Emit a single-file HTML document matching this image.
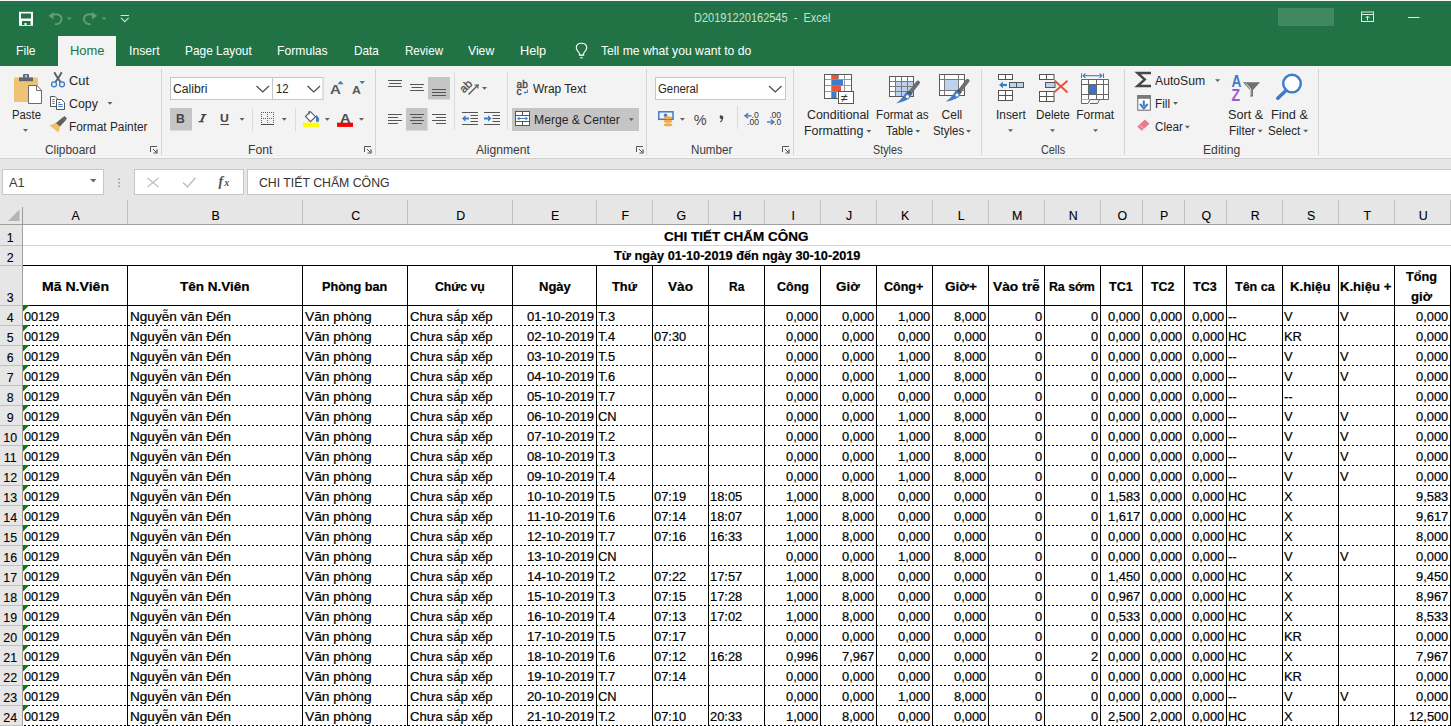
<!DOCTYPE html>
<html><head><meta charset='utf-8'><style>
*{margin:0;padding:0;box-sizing:border-box}
html,body{width:1451px;height:726px;overflow:hidden;background:#fff}
body{position:relative;font-family:'Liberation Sans',sans-serif}
.a{position:absolute}
.t{position:absolute;white-space:pre;transform-origin:0 0;font-family:'Liberation Sans',sans-serif}
.g{-webkit-text-stroke:0.2px currentColor}
.h{-webkit-text-stroke:0.1px currentColor}
svg{position:absolute;left:0;top:0;overflow:visible}
</style></head><body>
<div class="a" style="left:0px;top:0px;width:1451px;height:66px;background:#217346;"></div>
<div class="a" style="left:0px;top:0px;width:1451px;height:1px;background:#f4f6fb;"></div>
<div class="a" style="left:0px;top:1px;width:1451px;height:1px;background:#3d5a98;"></div>
<div class="a" style="left:0px;top:2px;width:1451px;height:2px;background:#1f7a3c;"></div>
<div class="a" style="left:0px;top:4px;width:1451px;height:1px;background:#237060;"></div>
<div class="a" style="left:0px;top:5px;width:1451px;height:1px;background:#22702e;"></div>
<div class="a" style="left:58px;top:36px;width:58px;height:30px;background:#f3f3f3;"></div>
<div class="a" style="left:0px;top:66px;width:1451px;height:92px;background:#f3f3f3;"></div>
<div class="a" style="left:0px;top:154px;width:1451px;height:4px;background:#f6f6f6;"></div>
<div class="a" style="left:0px;top:155px;width:1451px;height:1px;background:#ededed;"></div>
<div class="a" style="left:0px;top:158px;width:1451px;height:1px;background:#d2d2d2;"></div>
<div class="a" style="left:0px;top:159px;width:1451px;height:41px;background:#e6e6e6;"></div>
<div class="a" style="left:1278px;top:8px;width:56px;height:18px;background:#41875f;"></div>
<div class="a" style="left:161px;top:69px;width:1px;height:86px;background:#d5d5d5;"></div>
<div class="a" style="left:375px;top:69px;width:1px;height:86px;background:#d5d5d5;"></div>
<div class="a" style="left:646px;top:69px;width:1px;height:86px;background:#d5d5d5;"></div>
<div class="a" style="left:793px;top:69px;width:1px;height:86px;background:#d5d5d5;"></div>
<div class="a" style="left:981px;top:69px;width:1px;height:86px;background:#d5d5d5;"></div>
<div class="a" style="left:1124px;top:69px;width:1px;height:86px;background:#d5d5d5;"></div>
<div class="a" style="left:1318px;top:69px;width:1px;height:86px;background:#d5d5d5;"></div>
<div class="a" style="left:252px;top:108px;width:1px;height:23px;background:#dadada;"></div>
<div class="a" style="left:295px;top:108px;width:1px;height:23px;background:#dadada;"></div>
<div class="a" style="left:454px;top:72px;width:1px;height:58px;background:#dadada;"></div>
<div class="a" style="left:507px;top:72px;width:1px;height:58px;background:#dadada;"></div>
<div class="a" style="left:737px;top:106px;width:1px;height:23px;background:#dadada;"></div>
<div class="a" style="left:2px;top:169px;width:102px;height:26px;background:#ffffff;border:1px solid #c6c6c6"></div>
<div class="a" style="left:134px;top:169px;width:110px;height:26px;background:#ffffff;border:1px solid #c6c6c6"></div>
<div class="a" style="left:247px;top:169px;width:1210px;height:26px;background:#ffffff;border:1px solid #c6c6c6"></div>
<div class="a" style="left:0px;top:200px;width:1451px;height:24px;background:#e6e6e6;"></div>
<div class="a" style="left:0px;top:224px;width:1451px;height:1px;background:#9e9e9e;"></div>
<div class="a" style="left:22px;top:207px;width:1px;height:18px;background:#9a9a9a;"></div>
<div class="a" style="left:127px;top:200px;width:1px;height:24px;background:#c0c0c0;"></div>
<div class="a" style="left:302px;top:200px;width:1px;height:24px;background:#c0c0c0;"></div>
<div class="a" style="left:407px;top:200px;width:1px;height:24px;background:#c0c0c0;"></div>
<div class="a" style="left:512px;top:200px;width:1px;height:24px;background:#c0c0c0;"></div>
<div class="a" style="left:596px;top:200px;width:1px;height:24px;background:#c0c0c0;"></div>
<div class="a" style="left:652px;top:200px;width:1px;height:24px;background:#c0c0c0;"></div>
<div class="a" style="left:708px;top:200px;width:1px;height:24px;background:#c0c0c0;"></div>
<div class="a" style="left:764px;top:200px;width:1px;height:24px;background:#c0c0c0;"></div>
<div class="a" style="left:820px;top:200px;width:1px;height:24px;background:#c0c0c0;"></div>
<div class="a" style="left:876px;top:200px;width:1px;height:24px;background:#c0c0c0;"></div>
<div class="a" style="left:932px;top:200px;width:1px;height:24px;background:#c0c0c0;"></div>
<div class="a" style="left:988px;top:200px;width:1px;height:24px;background:#c0c0c0;"></div>
<div class="a" style="left:1044px;top:200px;width:1px;height:24px;background:#c0c0c0;"></div>
<div class="a" style="left:1100px;top:200px;width:1px;height:24px;background:#c0c0c0;"></div>
<div class="a" style="left:1142px;top:200px;width:1px;height:24px;background:#c0c0c0;"></div>
<div class="a" style="left:1184px;top:200px;width:1px;height:24px;background:#c0c0c0;"></div>
<div class="a" style="left:1226px;top:200px;width:1px;height:24px;background:#c0c0c0;"></div>
<div class="a" style="left:1282px;top:200px;width:1px;height:24px;background:#c0c0c0;"></div>
<div class="a" style="left:1338px;top:200px;width:1px;height:24px;background:#c0c0c0;"></div>
<div class="a" style="left:1394px;top:200px;width:1px;height:24px;background:#c0c0c0;"></div>
<div class="a" style="left:1450px;top:200px;width:1px;height:24px;background:#c0c0c0;"></div>
<svg width="1451" height="726"><polygon points="8,221 19.5,221 19.5,209.5" fill="#b4b4b4"/></svg>
<div class="a" style="left:23px;top:225px;width:1428px;height:501px;background:#ffffff;"></div>
<div class="a" style="left:23px;top:245px;width:1428px;height:1px;background:#d4d4d4;"></div>
<div class="a" style="left:22px;top:265px;width:1429px;height:1px;background:#000;"></div>
<div class="a" style="left:22px;top:305px;width:1429px;height:1px;background:#000;"></div>
<div class="a" style="left:0;top:325px;width:1451px;height:1px;background-image:repeating-linear-gradient(90deg,#000 0 2px,transparent 2px 4px)"></div>
<div class="a" style="left:0;top:345px;width:1451px;height:1px;background-image:repeating-linear-gradient(90deg,#000 0 2px,transparent 2px 4px)"></div>
<div class="a" style="left:0;top:365px;width:1451px;height:1px;background-image:repeating-linear-gradient(90deg,#000 0 2px,transparent 2px 4px)"></div>
<div class="a" style="left:0;top:385px;width:1451px;height:1px;background-image:repeating-linear-gradient(90deg,#000 0 2px,transparent 2px 4px)"></div>
<div class="a" style="left:0;top:405px;width:1451px;height:1px;background-image:repeating-linear-gradient(90deg,#000 0 2px,transparent 2px 4px)"></div>
<div class="a" style="left:0;top:425px;width:1451px;height:1px;background-image:repeating-linear-gradient(90deg,#000 0 2px,transparent 2px 4px)"></div>
<div class="a" style="left:0;top:445px;width:1451px;height:1px;background-image:repeating-linear-gradient(90deg,#000 0 2px,transparent 2px 4px)"></div>
<div class="a" style="left:0;top:465px;width:1451px;height:1px;background-image:repeating-linear-gradient(90deg,#000 0 2px,transparent 2px 4px)"></div>
<div class="a" style="left:0;top:485px;width:1451px;height:1px;background-image:repeating-linear-gradient(90deg,#000 0 2px,transparent 2px 4px)"></div>
<div class="a" style="left:0;top:505px;width:1451px;height:1px;background-image:repeating-linear-gradient(90deg,#000 0 2px,transparent 2px 4px)"></div>
<div class="a" style="left:0;top:525px;width:1451px;height:1px;background-image:repeating-linear-gradient(90deg,#000 0 2px,transparent 2px 4px)"></div>
<div class="a" style="left:0;top:545px;width:1451px;height:1px;background-image:repeating-linear-gradient(90deg,#000 0 2px,transparent 2px 4px)"></div>
<div class="a" style="left:0;top:565px;width:1451px;height:1px;background-image:repeating-linear-gradient(90deg,#000 0 2px,transparent 2px 4px)"></div>
<div class="a" style="left:0;top:585px;width:1451px;height:1px;background-image:repeating-linear-gradient(90deg,#000 0 2px,transparent 2px 4px)"></div>
<div class="a" style="left:0;top:605px;width:1451px;height:1px;background-image:repeating-linear-gradient(90deg,#000 0 2px,transparent 2px 4px)"></div>
<div class="a" style="left:0;top:625px;width:1451px;height:1px;background-image:repeating-linear-gradient(90deg,#000 0 2px,transparent 2px 4px)"></div>
<div class="a" style="left:0;top:645px;width:1451px;height:1px;background-image:repeating-linear-gradient(90deg,#000 0 2px,transparent 2px 4px)"></div>
<div class="a" style="left:0;top:665px;width:1451px;height:1px;background-image:repeating-linear-gradient(90deg,#000 0 2px,transparent 2px 4px)"></div>
<div class="a" style="left:0;top:685px;width:1451px;height:1px;background-image:repeating-linear-gradient(90deg,#000 0 2px,transparent 2px 4px)"></div>
<div class="a" style="left:0;top:705px;width:1451px;height:1px;background-image:repeating-linear-gradient(90deg,#000 0 2px,transparent 2px 4px)"></div>
<div class="a" style="left:0;top:725px;width:1451px;height:1px;background-image:repeating-linear-gradient(90deg,#000 0 2px,transparent 2px 4px)"></div>
<div class="a" style="left:127px;top:265px;width:1px;height:461px;background:#000;"></div>
<div class="a" style="left:302px;top:265px;width:1px;height:461px;background:#000;"></div>
<div class="a" style="left:407px;top:265px;width:1px;height:461px;background:#000;"></div>
<div class="a" style="left:512px;top:265px;width:1px;height:461px;background:#000;"></div>
<div class="a" style="left:596px;top:265px;width:1px;height:461px;background:#000;"></div>
<div class="a" style="left:652px;top:265px;width:1px;height:461px;background:#000;"></div>
<div class="a" style="left:708px;top:265px;width:1px;height:461px;background:#000;"></div>
<div class="a" style="left:764px;top:265px;width:1px;height:461px;background:#000;"></div>
<div class="a" style="left:820px;top:265px;width:1px;height:461px;background:#000;"></div>
<div class="a" style="left:876px;top:265px;width:1px;height:461px;background:#000;"></div>
<div class="a" style="left:932px;top:265px;width:1px;height:461px;background:#000;"></div>
<div class="a" style="left:988px;top:265px;width:1px;height:461px;background:#000;"></div>
<div class="a" style="left:1044px;top:265px;width:1px;height:461px;background:#000;"></div>
<div class="a" style="left:1100px;top:265px;width:1px;height:461px;background:#000;"></div>
<div class="a" style="left:1142px;top:265px;width:1px;height:461px;background:#000;"></div>
<div class="a" style="left:1184px;top:265px;width:1px;height:461px;background:#000;"></div>
<div class="a" style="left:1226px;top:265px;width:1px;height:461px;background:#000;"></div>
<div class="a" style="left:1282px;top:265px;width:1px;height:461px;background:#000;"></div>
<div class="a" style="left:1338px;top:265px;width:1px;height:461px;background:#000;"></div>
<div class="a" style="left:1394px;top:265px;width:1px;height:461px;background:#000;"></div>
<div class="a" style="left:1450px;top:265px;width:1px;height:461px;background:#000;"></div>
<div class="a" style="left:0px;top:225px;width:22px;height:501px;background:#e6e6e6;"></div>
<div class="a" style="left:22px;top:225px;width:1px;height:501px;background:#a0a0a0;"></div>
<div class="a" style="left:0px;top:245px;width:22px;height:1px;background:#c0c0c0;"></div>
<div class="a" style="left:0px;top:265px;width:22px;height:1px;background:#c0c0c0;"></div>
<div class="a" style="left:0px;top:305px;width:22px;height:1px;background:#c0c0c0;"></div>
<div class="a" style="left:0px;top:325px;width:22px;height:1px;background:#c0c0c0;"></div>
<div class="a" style="left:0px;top:345px;width:22px;height:1px;background:#c0c0c0;"></div>
<div class="a" style="left:0px;top:365px;width:22px;height:1px;background:#c0c0c0;"></div>
<div class="a" style="left:0px;top:385px;width:22px;height:1px;background:#c0c0c0;"></div>
<div class="a" style="left:0px;top:405px;width:22px;height:1px;background:#c0c0c0;"></div>
<div class="a" style="left:0px;top:425px;width:22px;height:1px;background:#c0c0c0;"></div>
<div class="a" style="left:0px;top:445px;width:22px;height:1px;background:#c0c0c0;"></div>
<div class="a" style="left:0px;top:465px;width:22px;height:1px;background:#c0c0c0;"></div>
<div class="a" style="left:0px;top:485px;width:22px;height:1px;background:#c0c0c0;"></div>
<div class="a" style="left:0px;top:505px;width:22px;height:1px;background:#c0c0c0;"></div>
<div class="a" style="left:0px;top:525px;width:22px;height:1px;background:#c0c0c0;"></div>
<div class="a" style="left:0px;top:545px;width:22px;height:1px;background:#c0c0c0;"></div>
<div class="a" style="left:0px;top:565px;width:22px;height:1px;background:#c0c0c0;"></div>
<div class="a" style="left:0px;top:585px;width:22px;height:1px;background:#c0c0c0;"></div>
<div class="a" style="left:0px;top:605px;width:22px;height:1px;background:#c0c0c0;"></div>
<div class="a" style="left:0px;top:625px;width:22px;height:1px;background:#c0c0c0;"></div>
<div class="a" style="left:0px;top:645px;width:22px;height:1px;background:#c0c0c0;"></div>
<div class="a" style="left:0px;top:665px;width:22px;height:1px;background:#c0c0c0;"></div>
<div class="a" style="left:0px;top:685px;width:22px;height:1px;background:#c0c0c0;"></div>
<div class="a" style="left:0px;top:705px;width:22px;height:1px;background:#c0c0c0;"></div>
<div class="a" style="left:0px;top:725px;width:22px;height:1px;background:#c0c0c0;"></div>
<svg width="1451" height="726"><polygon points="23,305 29.5,305 23,311.5" fill="#008000"/><polygon points="23,325 29.5,325 23,331.5" fill="#008000"/><polygon points="23,345 29.5,345 23,351.5" fill="#008000"/><polygon points="23,365 29.5,365 23,371.5" fill="#008000"/><polygon points="23,385 29.5,385 23,391.5" fill="#008000"/><polygon points="23,405 29.5,405 23,411.5" fill="#008000"/><polygon points="23,425 29.5,425 23,431.5" fill="#008000"/><polygon points="23,445 29.5,445 23,451.5" fill="#008000"/><polygon points="23,465 29.5,465 23,471.5" fill="#008000"/><polygon points="23,485 29.5,485 23,491.5" fill="#008000"/><polygon points="23,505 29.5,505 23,511.5" fill="#008000"/><polygon points="23,525 29.5,525 23,531.5" fill="#008000"/><polygon points="23,545 29.5,545 23,551.5" fill="#008000"/><polygon points="23,565 29.5,565 23,571.5" fill="#008000"/><polygon points="23,585 29.5,585 23,591.5" fill="#008000"/><polygon points="23,605 29.5,605 23,611.5" fill="#008000"/><polygon points="23,625 29.5,625 23,631.5" fill="#008000"/><polygon points="23,645 29.5,645 23,651.5" fill="#008000"/><polygon points="23,665 29.5,665 23,671.5" fill="#008000"/><polygon points="23,685 29.5,685 23,691.5" fill="#008000"/><polygon points="23,705 29.5,705 23,711.5" fill="#008000"/></svg>
<svg width="1451" height="726"><rect x="19" y="11.8" width="14" height="14" fill="#ffffff" /><rect x="21" y="13.5" width="10" height="5" fill="#217346" /><rect x="22" y="21" width="8.5" height="4" fill="#217346" /><rect x="24.5" y="23" width="2" height="2" fill="#ffffff" /><path d="M51 15.5 C56 12.5 62 15 61.5 19.5 C61 23.5 57.5 24.5 55 24" fill="none" stroke="#5f9f78" stroke-width="2" /><path d="M48.5 15.8 L53.5 12 L53.5 19.5 Z" fill="#5f9f78" /><path d="M66.8 17.5 L71.8 17.5 L69.3 20.0 Z" fill="#5f9f78" /><path d="M94.5 15.5 C89.5 12.5 83.5 15 84 19.5 C84.5 23.5 88 24.5 90.5 24" fill="none" stroke="#5f9f78" stroke-width="2" /><path d="M97 15.8 L92 12 L92 19.5 Z" fill="#5f9f78" /><path d="M101.6 17.5 L106.6 17.5 L104.1 20.0 Z" fill="#5f9f78" /><line x1="120.6" y1="15.5" x2="129" y2="15.5" stroke="#cfe6d7" stroke-width="1" /><path d="M121 17.8 L124.8 21.6 L128.6 17.8" fill="none" stroke="#cfe6d7" stroke-width="1.1" /><rect x="1361.5" y="12" width="12" height="9.5" fill="none" stroke="#d6eede" stroke-width="1" /><line x1="1361.5" y1="14.5" x2="1373.5" y2="14.5" stroke="#d6eede" stroke-width="1" /><line x1="1367.5" y1="16.5" x2="1367.5" y2="20.5" stroke="#d6eede" stroke-width="1" /><path d="M1365.5 18 L1367.5 16 L1369.5 18" fill="none" stroke="#d6eede" stroke-width="1" /><line x1="1408" y1="17.5" x2="1419.5" y2="17.5" stroke="#e0f0e6" stroke-width="1" /><path d="M579.3 55 L579.3 53 C577 50.5 576.3 49 576.3 47.8 C576.3 45 578.6 43.3 581.5 43.3 C584.4 43.3 586.7 45 586.7 47.8 C586.7 49 586 50.5 583.7 53 L583.7 55 Z" fill="none" stroke="#ffffff" stroke-width="1.1" /><line x1="579.3" y1="55.2" x2="583.7" y2="55.2" stroke="#ffffff" stroke-width="1" /><line x1="580.3" y1="57.8" x2="582.7" y2="57.8" stroke="#ffffff" stroke-width="1.1" /><rect x="14" y="77.5" width="24" height="24.5" fill="#f0c274" rx="1"/><rect x="19" y="77.4" width="14" height="3.8" fill="#5c6570" /><path d="M23 77.5 L23 74.8 Q23 74 24 74 L28 74 Q29 74 29 74.8 L29 77.5 Z" fill="#5c6570" /><rect x="25" y="75.2" width="2" height="1.6" fill="#dfe3e8" /><path d="M28.5 85.5 L36.8 85.5 L41.5 90.2 L41.5 103.5 L28.5 103.5 Z" fill="#ffffff" stroke="#6a6a6a" stroke-width="1" /><path d="M36.5 85.5 L36.5 90.5 L41.5 90.5" fill="none" stroke="#6a6a6a" stroke-width="1" /><path d="M23.0 129 L28.0 129 L25.5 131.7 Z" fill="#606060" /><path d="M54.3 72.3 Q56 75.5 58 78.5 L61 82.5" fill="none" stroke="#5e5e5e" stroke-width="1.9" /><path d="M61.7 72.3 Q60 75.5 58 78.5 L55 82.5" fill="none" stroke="#5e5e5e" stroke-width="1.9" /><circle cx="54" cy="84.3" r="2.5" fill="#e9f0f8" stroke="#3f7bc6" stroke-width="1.3"/><circle cx="62" cy="84.3" r="2.5" fill="#e9f0f8" stroke="#3f7bc6" stroke-width="1.3"/><path d="M50.5 96.5 L55 96.5 L57 98.5 L57 106.5 L50.5 106.5 Z" fill="#ffffff" stroke="#555" stroke-width="1" /><line x1="52.3" y1="99.5" x2="54.7" y2="99.5" stroke="#3f7bc6" stroke-width="1" /><line x1="52.3" y1="101.5" x2="54.7" y2="101.5" stroke="#3f7bc6" stroke-width="1" /><line x1="52.3" y1="103.5" x2="54.7" y2="103.5" stroke="#3f7bc6" stroke-width="1" /><path d="M56.5 99.5 L61.5 99.5 L64.5 102.5 L64.5 109.5 L56.5 109.5 Z" fill="#ffffff" stroke="#555" stroke-width="1" /><line x1="58.3" y1="102.5" x2="60.3" y2="102.5" stroke="#3f7bc6" stroke-width="1" /><line x1="58.3" y1="104.5" x2="62.7" y2="104.5" stroke="#3f7bc6" stroke-width="1" /><line x1="58.3" y1="106.5" x2="62.7" y2="106.5" stroke="#3f7bc6" stroke-width="1" /><path d="M107.5 102 L112.5 102 L110 104.7 Z" fill="#606060" /><path d="M49.5 125.5 L56.5 122.5 L60 126.5 L58.5 132.5 Z" fill="#efbe68" /><path d="M56 123 L62.5 117.5 L65.5 120.5 L60 126.5 Z" fill="#5f5f5f" /><path d="M62.5 117.8 L64.5 116 L67 118.5 L65.2 120.5 Z" fill="#5f5f5f" /><path d="M150.5 152 L150.5 146.5 L157 146.5" fill="none" stroke="#555" stroke-width="1" /><line x1="153" y1="149" x2="156.5" y2="152.5" stroke="#555" stroke-width="1" /><path d="M153.5 153 L157 153 L157 149.5" fill="none" stroke="#555" stroke-width="1.2" /><path d="M364.5 152 L364.5 146.5 L371 146.5" fill="none" stroke="#555" stroke-width="1" /><line x1="367" y1="149" x2="370.5" y2="152.5" stroke="#555" stroke-width="1" /><path d="M367.5 153 L371 153 L371 149.5" fill="none" stroke="#555" stroke-width="1.2" /><path d="M636.5 152 L636.5 146.5 L643 146.5" fill="none" stroke="#555" stroke-width="1" /><line x1="639" y1="149" x2="642.5" y2="152.5" stroke="#555" stroke-width="1" /><path d="M639.5 153 L643 153 L643 149.5" fill="none" stroke="#555" stroke-width="1.2" /><path d="M782.5 152 L782.5 146.5 L789 146.5" fill="none" stroke="#555" stroke-width="1" /><line x1="785" y1="149" x2="788.5" y2="152.5" stroke="#555" stroke-width="1" /><path d="M785.5 153 L789 153 L789 149.5" fill="none" stroke="#555" stroke-width="1.2" /><rect x="170.5" y="77.5" width="102" height="22" fill="#ffffff" stroke="#c6c6c6" stroke-width="1" /><rect x="272.5" y="77.5" width="50.5" height="22" fill="#ffffff" stroke="#c6c6c6" stroke-width="1" /><path d="M256.5 86 L262.8 92 L269 86" fill="none" stroke="#4a4a4a" stroke-width="1.2" /><path d="M307.5 86 L313.8 92 L320 86" fill="none" stroke="#4a4a4a" stroke-width="1.2" /><path d="M337.5 84.3 L340.5 80.8 L343.5 84.3 Z" fill="#3f7bc6" /><path d="M359.5 81 L365 81 L362.2 84.3 Z" fill="#3f7bc6" /><rect x="170" y="108" width="22" height="22.5" fill="#c5c5c5" /><line x1="220.5" y1="124.5" x2="229" y2="124.5" stroke="#444444" stroke-width="1" /><path d="M239.5 118 L244.5 118 L242 120.7 Z" fill="#606060" /><rect x="261" y="112" width="1" height="1" fill="#606060" /><rect x="263" y="112" width="1" height="1" fill="#606060" /><rect x="265" y="112" width="1" height="1" fill="#606060" /><rect x="267" y="112" width="1" height="1" fill="#606060" /><rect x="269" y="112" width="1" height="1" fill="#606060" /><rect x="271" y="112" width="1" height="1" fill="#606060" /><rect x="273" y="112" width="1" height="1" fill="#606060" /><rect x="261" y="114" width="1" height="1" fill="#606060" /><rect x="267" y="114" width="1" height="1" fill="#606060" /><rect x="273" y="114" width="1" height="1" fill="#606060" /><rect x="261" y="116" width="1" height="1" fill="#606060" /><rect x="267" y="116" width="1" height="1" fill="#606060" /><rect x="273" y="116" width="1" height="1" fill="#606060" /><rect x="261" y="118" width="1" height="1" fill="#606060" /><rect x="263" y="118" width="1" height="1" fill="#606060" /><rect x="265" y="118" width="1" height="1" fill="#606060" /><rect x="267" y="118" width="1" height="1" fill="#606060" /><rect x="269" y="118" width="1" height="1" fill="#606060" /><rect x="271" y="118" width="1" height="1" fill="#606060" /><rect x="273" y="118" width="1" height="1" fill="#606060" /><rect x="261" y="120" width="1" height="1" fill="#606060" /><rect x="267" y="120" width="1" height="1" fill="#606060" /><rect x="273" y="120" width="1" height="1" fill="#606060" /><rect x="261" y="122" width="1" height="1" fill="#606060" /><rect x="267" y="122" width="1" height="1" fill="#606060" /><rect x="273" y="122" width="1" height="1" fill="#606060" /><rect x="261" y="124" width="1" height="1" fill="#606060" /><rect x="263" y="124" width="1" height="1" fill="#606060" /><rect x="265" y="124" width="1" height="1" fill="#606060" /><rect x="267" y="124" width="1" height="1" fill="#606060" /><rect x="269" y="124" width="1" height="1" fill="#606060" /><rect x="271" y="124" width="1" height="1" fill="#606060" /><rect x="273" y="124" width="1" height="1" fill="#606060" /><line x1="261" y1="124.5" x2="274" y2="124.5" stroke="#505050" stroke-width="1" /><path d="M281.8 118 L286.8 118 L284.3 120.7 Z" fill="#606060" /><path d="M305.5 116.5 L310.3 111.5 L315.5 116.7 L310.5 121.6 Z" fill="#ffffff" stroke="#5c5c5c" stroke-width="1.1" /><path d="M309 111 L309 114.5" fill="none" stroke="#5c5c5c" stroke-width="1" /><path d="M316 114.8 Q320.6 118.3 318.6 121.6 Q317.3 122.8 316 121.2 Z" fill="#3f7bc6" /><rect x="303" y="122.7" width="16" height="4.2" fill="#ffff00" /><path d="M324.8 118 L329.8 118 L327.3 120.7 Z" fill="#606060" /><rect x="337" y="122.7" width="16" height="4.2" fill="#ff0000" /><path d="M359.0 118 L364.0 118 L361.5 120.7 Z" fill="#606060" /><line x1="388" y1="80.5" x2="402" y2="80.5" stroke="#555" stroke-width="1" /><line x1="389.3" y1="83.5" x2="401" y2="83.5" stroke="#555" stroke-width="1" /><line x1="388" y1="86.5" x2="402" y2="86.5" stroke="#555" stroke-width="1" /><line x1="410" y1="84.5" x2="424" y2="84.5" stroke="#555" stroke-width="1" /><line x1="411.5" y1="87.5" x2="422.5" y2="87.5" stroke="#555" stroke-width="1" /><line x1="410" y1="90.5" x2="424" y2="90.5" stroke="#555" stroke-width="1" /><rect x="428" y="77" width="22" height="22.5" fill="#c5c5c5" /><line x1="432" y1="89.5" x2="446" y2="89.5" stroke="#555" stroke-width="1" /><line x1="432" y1="92.5" x2="446" y2="92.5" stroke="#555" stroke-width="1" /><line x1="432" y1="95.5" x2="446" y2="95.5" stroke="#555" stroke-width="1" /><rect x="406" y="108" width="21.5" height="22.5" fill="#c5c5c5" /><line x1="388" y1="114.5" x2="402" y2="114.5" stroke="#555" stroke-width="1" /><line x1="410" y1="114.5" x2="424" y2="114.5" stroke="#555" stroke-width="1" /><line x1="432" y1="114.5" x2="446" y2="114.5" stroke="#555" stroke-width="1" /><line x1="388" y1="117.5" x2="398" y2="117.5" stroke="#555" stroke-width="1" /><line x1="412" y1="117.5" x2="422" y2="117.5" stroke="#555" stroke-width="1" /><line x1="436" y1="117.5" x2="446" y2="117.5" stroke="#555" stroke-width="1" /><line x1="388" y1="120.5" x2="402" y2="120.5" stroke="#555" stroke-width="1" /><line x1="410" y1="120.5" x2="424" y2="120.5" stroke="#555" stroke-width="1" /><line x1="432" y1="120.5" x2="446" y2="120.5" stroke="#555" stroke-width="1" /><line x1="388" y1="123.5" x2="398" y2="123.5" stroke="#555" stroke-width="1" /><line x1="412" y1="123.5" x2="422" y2="123.5" stroke="#555" stroke-width="1" /><line x1="436" y1="123.5" x2="446" y2="123.5" stroke="#555" stroke-width="1" /><text x="0" y="0" transform="translate(464,93.5) rotate(-45)" font-family="Liberation Sans" font-size="11.5" fill="#4a4a4a" stroke="#4a4a4a" stroke-width="0.3">ab</text><line x1="468.5" y1="94.5" x2="477.5" y2="85.5" stroke="#4a4a4a" stroke-width="1.1" /><path d="M474.5 85.3 L478.2 84.8 L477.7 88.5" fill="none" stroke="#4a4a4a" stroke-width="1.1" /><path d="M482.0 87 L487.0 87 L484.5 89.7 Z" fill="#606060" /><line x1="462" y1="112.5" x2="478" y2="112.5" stroke="#555" stroke-width="1" /><line x1="462" y1="124.5" x2="478" y2="124.5" stroke="#555" stroke-width="1" /><line x1="470.5" y1="115.5" x2="478" y2="115.5" stroke="#555" stroke-width="1" /><line x1="470.5" y1="118.5" x2="478" y2="118.5" stroke="#555" stroke-width="1" /><line x1="470.5" y1="121.5" x2="478" y2="121.5" stroke="#555" stroke-width="1" /><path d="M464.5 118.5 L469 118.5" fill="none" stroke="#3f7bc6" stroke-width="2" /><path d="M465.5 115.3 L462 118.5 L465.5 121.7 Z" fill="#3f7bc6" /><line x1="484" y1="112.5" x2="500" y2="112.5" stroke="#555" stroke-width="1" /><line x1="484" y1="124.5" x2="500" y2="124.5" stroke="#555" stroke-width="1" /><line x1="492.5" y1="115.5" x2="500" y2="115.5" stroke="#555" stroke-width="1" /><line x1="492.5" y1="118.5" x2="500" y2="118.5" stroke="#555" stroke-width="1" /><line x1="492.5" y1="121.5" x2="500" y2="121.5" stroke="#555" stroke-width="1" /><path d="M484 118.5 L489 118.5" fill="none" stroke="#3f7bc6" stroke-width="2" /><path d="M488 115.3 L491.5 118.5 L488 121.7 Z" fill="#3f7bc6" /><text x="516.6" y="87.8" font-family="Liberation Sans" font-size="10" fill="#444" stroke="#444" stroke-width="0.35">ab</text><text x="516.6" y="94.5" font-family="Liberation Sans" font-size="10" fill="#444" stroke="#444" stroke-width="0.35">c</text><path d="M527.5 89.5 L527.5 92.5 L524.5 92.5" fill="none" stroke="#3f7bc6" stroke-width="1" /><path d="M525.5 91 L523.5 92.5 L525.5 94 Z" fill="#3f7bc6" /><rect x="512" y="108" width="127" height="23" fill="#c5c5c5" /><rect x="515.5" y="111.5" width="14" height="14" fill="#ffffff" stroke="#555" stroke-width="1" /><line x1="515.5" y1="115.5" x2="529.5" y2="115.5" stroke="#555" stroke-width="1" /><line x1="515.5" y1="121.5" x2="529.5" y2="121.5" stroke="#555" stroke-width="1" /><line x1="522.5" y1="111.5" x2="522.5" y2="115.5" stroke="#555" stroke-width="1" /><line x1="522.5" y1="121.5" x2="522.5" y2="125.5" stroke="#555" stroke-width="1" /><line x1="518.5" y1="118.5" x2="526.5" y2="118.5" stroke="#3f7bc6" stroke-width="1" /><path d="M517 118.5 L519.5 116.5 L519.5 120.5 Z" fill="#3f7bc6" /><path d="M528 118.5 L525.5 116.5 L525.5 120.5 Z" fill="#3f7bc6" /><path d="M628.8 118.3 L633.8 118.3 L631.3 121.0 Z" fill="#606060" /><rect x="655.5" y="77.5" width="130" height="22" fill="#ffffff" stroke="#c6c6c6" stroke-width="1" /><path d="M769 86 L775.3 92 L781.5 86" fill="none" stroke="#4a4a4a" stroke-width="1.2" /><rect x="658.8" y="111.8" width="14.2" height="7.5" fill="none" stroke="#3f7bc6" stroke-width="1.5" /><circle cx="665.5" cy="115.3" r="1.7" fill="#3f7bc6"/><ellipse cx="668" cy="117.8" rx="4.2" ry="1.5" fill="#f2a94a"/><ellipse cx="668" cy="121.3" rx="4.2" ry="1.5" fill="#f2a94a"/><ellipse cx="668" cy="124.8" rx="4.2" ry="1.5" fill="#f2a94a"/><path d="M679.9 118 L684.9 118 L682.4 120.7 Z" fill="#606060" /><text x="693.8" y="124.8" font-family="Liberation Sans" font-size="14.5" fill="#4a4a4a">%</text><path d="M720.5 115.2 Q723.5 115.2 723.3 118 Q723 121 720.2 122.4 L720 121.5 Q721.5 120.5 721.6 119 Q719.6 118.8 719.6 117 Q719.8 115.2 720.5 115.2 Z" fill="#444" /><text x="751.5" y="117.8" font-family="Liberation Sans" font-size="8.6" fill="#333">.0</text><text x="747" y="125" font-family="Liberation Sans" font-size="8.6" fill="#333">.00</text><text x="769.2" y="117.8" font-family="Liberation Sans" font-size="8.6" fill="#333">.00</text><text x="774" y="125" font-family="Liberation Sans" font-size="8.6" fill="#333">.0</text><path d="M746 115.8 L751.5 115.8" fill="none" stroke="#3f7bc6" stroke-width="1.4" /><path d="M748.2 113.4 L745 115.8 L748.2 118.2" fill="none" stroke="#3f7bc6" stroke-width="1.4" /><path d="M767 122 L773 122" fill="none" stroke="#3f7bc6" stroke-width="1.4" /><path d="M770.8 119.6 L774 122 L770.8 124.4" fill="none" stroke="#3f7bc6" stroke-width="1.4" /><rect x="824.5" y="74.5" width="27" height="24" fill="#ffffff" /><line x1="831.5" y1="74.5" x2="831.5" y2="98.5" stroke="#9a9a9a" stroke-width="1" /><line x1="838.5" y1="74.5" x2="838.5" y2="98.5" stroke="#9a9a9a" stroke-width="1" /><line x1="844.5" y1="74.5" x2="844.5" y2="98.5" stroke="#9a9a9a" stroke-width="1" /><line x1="824.5" y1="79.5" x2="851.5" y2="79.5" stroke="#9a9a9a" stroke-width="1" /><line x1="824.5" y1="85.5" x2="851.5" y2="85.5" stroke="#9a9a9a" stroke-width="1" /><line x1="824.5" y1="91.5" x2="851.5" y2="91.5" stroke="#9a9a9a" stroke-width="1" /><rect x="832" y="75" width="6" height="4.5" fill="#e4573b" /><rect x="832" y="80" width="11" height="5.5" fill="#3d7cc9" /><rect x="832" y="86" width="9" height="5.5" fill="#e4573b" /><rect x="832" y="92" width="4.5" height="6" fill="#3d7cc9" /><rect x="824.5" y="74.5" width="27" height="24" fill="none" stroke="#5a5a5a" stroke-width="1" /><rect x="838.5" y="91.5" width="15" height="12" fill="#ffffff" stroke="#555" stroke-width="1" /><text x="841" y="101.8" font-family="Liberation Sans" font-size="12.5" fill="#333">≠</text><rect x="889.5" y="76.5" width="24" height="20" fill="#ffffff" /><rect x="896" y="82" width="17.5" height="14.5" fill="#bdd3ec" /><line x1="895.5" y1="76.5" x2="895.5" y2="96.5" stroke="#7a7a7a" stroke-width="1" /><line x1="901.5" y1="76.5" x2="901.5" y2="96.5" stroke="#7a7a7a" stroke-width="1" /><line x1="907.5" y1="76.5" x2="907.5" y2="96.5" stroke="#7a7a7a" stroke-width="1" /><line x1="889.5" y1="81.5" x2="913.5" y2="81.5" stroke="#7a7a7a" stroke-width="1" /><line x1="889.5" y1="86.5" x2="913.5" y2="86.5" stroke="#7a7a7a" stroke-width="1" /><line x1="889.5" y1="91.5" x2="913.5" y2="91.5" stroke="#7a7a7a" stroke-width="1" /><rect x="889.5" y="76.5" width="24" height="20" fill="none" stroke="#5a5a5a" stroke-width="1" /><line x1="918" y1="82.5" x2="909.7" y2="93.0" stroke="#6e6e6e" stroke-width="4" stroke-linecap="round"/><line x1="910.4000000000001" y1="92.2" x2="908.2" y2="94.8" stroke="#4e4e4e" stroke-width="4.6"/><path d="M910.6 94.6 Q911.7 100.3 896.2 103.39999999999999 Q903.2 97.8 906.0 92.0 Z" fill="#3f7bc6" /><circle cx="907.4000000000001" cy="96.6" r="1.6" fill="#ffffff"/><rect x="939.5" y="74.5" width="25" height="21" fill="#ffffff" /><rect x="945" y="80" width="13.5" height="10.5" fill="#bdd3ec" /><line x1="944.5" y1="74.5" x2="944.5" y2="95.5" stroke="#7a7a7a" stroke-width="1" /><line x1="958.5" y1="74.5" x2="958.5" y2="95.5" stroke="#7a7a7a" stroke-width="1" /><line x1="939.5" y1="79.5" x2="964.5" y2="79.5" stroke="#7a7a7a" stroke-width="1" /><line x1="939.5" y1="90.5" x2="964.5" y2="90.5" stroke="#7a7a7a" stroke-width="1" /><rect x="939.5" y="74.5" width="25" height="21" fill="none" stroke="#5a5a5a" stroke-width="1" /><line x1="967.5" y1="80.8" x2="959.3" y2="91.4" stroke="#6e6e6e" stroke-width="4" stroke-linecap="round"/><line x1="960.0" y1="90.60000000000001" x2="957.8" y2="93.2" stroke="#4e4e4e" stroke-width="4.6"/><path d="M960.1999999999999 93.0 Q961.3 98.7 945.8 101.8 Q952.8 96.2 955.5999999999999 90.4 Z" fill="#3f7bc6" /><circle cx="957.0" cy="95.0" r="1.6" fill="#ffffff"/><path d="M866.4 130 L871.4 130 L868.9 132.7 Z" fill="#606060" /><path d="M915.3 130 L920.3 130 L917.8 132.7 Z" fill="#606060" /><path d="M966.0 130 L971.0 130 L968.5 132.7 Z" fill="#606060" /><rect x="998.5" y="74.5" width="14" height="5" fill="#ffffff" stroke="#555" stroke-width="1" /><line x1="1005.5" y1="74.5" x2="1005.5" y2="79.5" stroke="#555" stroke-width="1" /><rect x="1009.5" y="82.5" width="14" height="5" fill="#bdd3ec" stroke="#555" stroke-width="1" /><line x1="1016.5" y1="82.5" x2="1016.5" y2="87.5" stroke="#555" stroke-width="1" /><rect x="998.5" y="90.5" width="14" height="10" fill="#ffffff" stroke="#555" stroke-width="1" /><line x1="1005.5" y1="90.5" x2="1005.5" y2="100.5" stroke="#555" stroke-width="1" /><line x1="998.5" y1="95.5" x2="1012.5" y2="95.5" stroke="#555" stroke-width="1" /><path d="M1002 85 L1007 85" fill="none" stroke="#3f7bc6" stroke-width="2.2" /><path d="M1003 81.8 L999 85 L1003 88.2 Z" fill="#3f7bc6" /><path d="M1008.0 129.2 L1013.0 129.2 L1010.5 131.89999999999998 Z" fill="#606060" /><rect x="1039.5" y="74.5" width="14.5" height="5" fill="#ffffff" stroke="#555" stroke-width="1" /><line x1="1046.5" y1="74.5" x2="1046.5" y2="79.5" stroke="#555" stroke-width="1" /><rect x="1045.5" y="82.5" width="9.5" height="5" fill="#bdd3ec" stroke="#555" stroke-width="1" /><rect x="1039.5" y="91.5" width="14.5" height="10" fill="#ffffff" stroke="#555" stroke-width="1" /><line x1="1046.5" y1="91.5" x2="1046.5" y2="101.5" stroke="#555" stroke-width="1" /><line x1="1039.5" y1="96.5" x2="1054" y2="96.5" stroke="#555" stroke-width="1" /><line x1="1054.5" y1="80.5" x2="1067.5" y2="92.5" stroke="#e3553a" stroke-width="2" /><line x1="1067.5" y1="80.8" x2="1054.5" y2="92" stroke="#e3553a" stroke-width="2" /><path d="M1050.0 129.2 L1055.0 129.2 L1052.5 131.89999999999998 Z" fill="#606060" /><line x1="1081.5" y1="73.3" x2="1081.5" y2="78" stroke="#3f7bc6" stroke-width="1" /><line x1="1103.5" y1="73.3" x2="1103.5" y2="78" stroke="#3f7bc6" stroke-width="1" /><line x1="1083" y1="75.7" x2="1102" y2="75.7" stroke="#3f7bc6" stroke-width="1.1" /><path d="M1085.5 73.5 L1083 75.7 L1085.5 77.9" fill="none" stroke="#3f7bc6" stroke-width="1.1" /><path d="M1099.5 73.5 L1102 75.7 L1099.5 77.9" fill="none" stroke="#3f7bc6" stroke-width="1.1" /><rect x="1081.5" y="79.5" width="27" height="20" fill="#ffffff" /><rect x="1088.5" y="84.7" width="8" height="9.8" fill="#3a75c4" /><line x1="1081.5" y1="79.5" x2="1081.5" y2="99.5" stroke="#666" stroke-width="1" /><line x1="1088.5" y1="79.5" x2="1088.5" y2="99.5" stroke="#666" stroke-width="1" /><line x1="1096.5" y1="79.5" x2="1096.5" y2="99.5" stroke="#666" stroke-width="1" /><line x1="1103.5" y1="79.5" x2="1103.5" y2="99.5" stroke="#666" stroke-width="1" /><line x1="1108.5" y1="79.5" x2="1108.5" y2="99.5" stroke="#666" stroke-width="1" /><line x1="1081.5" y1="79.5" x2="1108.5" y2="79.5" stroke="#666" stroke-width="1" /><line x1="1081.5" y1="84.5" x2="1108.5" y2="84.5" stroke="#666" stroke-width="1" /><line x1="1081.5" y1="94.5" x2="1108.5" y2="94.5" stroke="#666" stroke-width="1" /><line x1="1081.5" y1="99.5" x2="1108.5" y2="99.5" stroke="#666" stroke-width="1" /><path d="M1081.5 99.5 L1081.5 103.5 L1088 103.5 L1090 99.5" fill="#fff" stroke="#666" stroke-width="1" /><path d="M1090 103.5 L1097.5 103.5 L1099.5 99.5" fill="none" stroke="#666" stroke-width="1" /><path d="M1093.1 129.2 L1098.1 129.2 L1095.6 131.89999999999998 Z" fill="#606060" /><path d="M1151 73 L1137.5 73 L1144.8 79.5 L1137.5 86 L1151 86" fill="none" stroke="#474747" stroke-width="2.4" stroke-linejoin="miter"/><path d="M1215.1 79.2 L1220.1 79.2 L1217.6 81.9 Z" fill="#606060" /><rect x="1137.8" y="95.6" width="12.5" height="14.6" fill="#ffffff" stroke="#666" stroke-width="1" /><rect x="1137.3" y="95.2" width="13.5" height="3.6" fill="#7a7a7a" /><path d="M1143.8 100.5 L1143.8 106" fill="none" stroke="#3f7bc6" stroke-width="2" /><path d="M1140 104 L1143.8 108.5 L1147.6 104" fill="none" stroke="#3f7bc6" stroke-width="2" /><path d="M1173.0 102 L1178.0 102 L1175.5 104.7 Z" fill="#606060" /><path d="M1137.3 126.5 L1145 119.5 L1149.5 123.8 L1141.8 130.8 Z" fill="#e87b8e" /><line x1="1139.5" y1="124.8" x2="1143.8" y2="129" stroke="#f7d0d8" stroke-width="0.8" /><path d="M1184.9 125.8 L1189.9 125.8 L1187.4 128.5 Z" fill="#606060" /><text x="0" y="0" transform="translate(1231.4,86.6) scale(0.86,1)" font-family="Liberation Sans" font-size="16" font-weight="bold" fill="#3f7bc6">A</text><text x="0" y="0" transform="translate(1231.6,100.8) scale(0.9,1)" font-family="Liberation Sans" font-size="15.6" font-weight="bold" fill="#9a57cf">Z</text><path d="M1243 82.2 L1260 82.2 L1253 90 L1253 96.5 L1250 96.5 L1250 90 Z" fill="#707070" /><path d="M1246 83.5 L1250.8 89 L1250.8 95.5" fill="none" stroke="#f3f3f3" stroke-width="0.9" /><path d="M1257.7 129.8 L1262.7 129.8 L1260.2 132.5 Z" fill="#606060" /><circle cx="1292" cy="83.6" r="8.8" fill="#ffffff" stroke="#3f7bc6" stroke-width="2.4"/><line x1="1286" y1="90.5" x2="1277.8" y2="98.2" stroke="#3f7bc6" stroke-width="3.6" stroke-linecap="round"/><path d="M1303.2 129.8 L1308.2 129.8 L1305.7 132.5 Z" fill="#606060" /><line x1="201.3" y1="114.6" x2="206.5" y2="114.6" stroke="#444" stroke-width="1.2" /><line x1="198.5" y1="121.7" x2="203.7" y2="121.7" stroke="#444" stroke-width="1.2" /><line x1="204.3" y1="114.6" x2="201.1" y2="121.7" stroke="#444" stroke-width="1.9" /><path d="M90 179 L96.5 179 L93.25 182.6 Z" fill="#6a6a6a" /><rect x="118.3" y="178.5" width="1.6" height="1.6" fill="#9a9a9a" /><rect x="118.3" y="182" width="1.6" height="1.6" fill="#9a9a9a" /><rect x="118.3" y="185.5" width="1.6" height="1.6" fill="#9a9a9a" /><line x1="147.5" y1="178" x2="158.5" y2="187" stroke="#c3c3c3" stroke-width="1.4" /><line x1="158.5" y1="178" x2="147.5" y2="187" stroke="#c3c3c3" stroke-width="1.4" /><path d="M183 182.5 L187.5 186.8 L195.5 177.8" fill="none" stroke="#c3c3c3" stroke-width="1.6" /><text x="218.5" y="186.3" font-family="Liberation Serif" font-style="italic" font-weight="bold" font-size="14" fill="#505050">f</text><text x="224.3" y="186" font-family="Liberation Serif" font-style="italic" font-weight="bold" font-size="10" fill="#505050">x</text></svg>
<div class="t " style="left:693.60px;top:11.80px;font-size:12px;line-height:12px;color:#c3e2cd;transform:scaleX(0.9168)">D20191220162545  -  Excel</div>
<div class="t " style="left:16.40px;top:44.79px;font-size:12.6px;line-height:12.6px;color:#ffffff;transform:scaleX(0.9657)">File</div>
<div class="t " style="left:69.60px;top:44.79px;font-size:12.6px;line-height:12.6px;color:#217346;transform:scaleX(1.0270)">Home</div>
<div class="t " style="left:129.40px;top:44.79px;font-size:12.6px;line-height:12.6px;color:#ffffff;transform:scaleX(0.9714)">Insert</div>
<div class="t " style="left:185.40px;top:44.79px;font-size:12.6px;line-height:12.6px;color:#ffffff;transform:scaleX(0.9430)">Page Layout</div>
<div class="t " style="left:277.20px;top:44.79px;font-size:12.6px;line-height:12.6px;color:#ffffff;transform:scaleX(0.9660)">Formulas</div>
<div class="t " style="left:353.50px;top:44.79px;font-size:12.6px;line-height:12.6px;color:#ffffff;transform:scaleX(0.9358)">Data</div>
<div class="t " style="left:404.50px;top:44.79px;font-size:12.6px;line-height:12.6px;color:#ffffff;transform:scaleX(0.9202)">Review</div>
<div class="t " style="left:468.40px;top:44.79px;font-size:12.6px;line-height:12.6px;color:#ffffff;transform:scaleX(0.9676)">View</div>
<div class="t " style="left:520.30px;top:44.79px;font-size:12.6px;line-height:12.6px;color:#ffffff;transform:scaleX(1.0113)">Help</div>
<div class="t " style="left:601.00px;top:44.79px;font-size:12.6px;line-height:12.6px;color:#ffffff;transform:scaleX(0.9671)">Tell me what you want to do</div>
<div class="t " style="left:11.70px;top:108.80px;font-size:12px;line-height:12px;color:#262626;transform:scaleX(0.9450)">Paste</div>
<div class="t " style="left:68.90px;top:74.80px;font-size:12px;line-height:12px;color:#262626;transform:scaleX(1.0702)">Cut</div>
<div class="t " style="left:68.90px;top:97.80px;font-size:12px;line-height:12px;color:#262626;transform:scaleX(1.0280)">Copy</div>
<div class="t " style="left:68.90px;top:120.80px;font-size:12px;line-height:12px;color:#262626;transform:scaleX(0.9892)">Format Painter</div>
<div class="t " style="left:44.80px;top:143.80px;font-size:12px;line-height:12px;color:#3a3a3a;transform:scaleX(0.9908)">Clipboard</div>
<div class="t " style="left:173.00px;top:82.80px;font-size:12px;line-height:12px;color:#262626;transform:scaleX(1.0142)">Calibri</div>
<div class="t " style="left:276.30px;top:82.80px;font-size:12px;line-height:12px;color:#262626;transform:scaleX(0.9432)">12</div>
<div class="t " style="left:247.80px;top:143.80px;font-size:12px;line-height:12px;color:#3a3a3a;transform:scaleX(1.0160)">Font</div>
<div class="t " style="left:176.00px;top:112.80px;font-size:12px;line-height:12px;color:#444;font-weight:bold;transform:scaleX(1.0148)">B</div>
<div class="t " style="left:220.20px;top:112.72px;font-size:11.5px;line-height:11.5px;color:#444;font-weight:bold;transform:scaleX(1.0586)">U</div>
<div class="t " style="left:329.60px;top:82.95px;font-size:13px;line-height:13px;color:#5a5a5a;font-weight:bold;transform:scaleX(1.1607)">A</div>
<div class="t " style="left:352.30px;top:85.08px;font-size:10.5px;line-height:10.5px;color:#5a5a5a;font-weight:bold;transform:scaleX(1.1720)">A</div>
<div class="t " style="left:340.30px;top:111.78px;font-size:13.2px;line-height:13.2px;color:#4a4a4a;font-weight:bold;transform:scaleX(1.1121)">A</div>
<div class="t " style="left:533.30px;top:82.80px;font-size:12px;line-height:12px;color:#262626;transform:scaleX(0.9929)">Wrap Text</div>
<div class="t " style="left:533.80px;top:114.30px;font-size:12px;line-height:12px;color:#262626;transform:scaleX(1.0141)">Merge &amp; Center</div>
<div class="t " style="left:475.50px;top:144.30px;font-size:12px;line-height:12px;color:#3a3a3a;transform:scaleX(1.0098)">Alignment</div>
<div class="t " style="left:657.90px;top:82.80px;font-size:12px;line-height:12px;color:#262626;transform:scaleX(0.9461)">General</div>
<div class="t " style="left:691.00px;top:143.80px;font-size:12px;line-height:12px;color:#3a3a3a;transform:scaleX(0.9675)">Number</div>
<div class="t " style="left:806.90px;top:108.80px;font-size:12px;line-height:12px;color:#262626;transform:scaleX(1.0342)">Conditional</div>
<div class="t " style="left:803.80px;top:124.80px;font-size:12px;line-height:12px;color:#262626;transform:scaleX(1.0338)">Formatting</div>
<div class="t " style="left:875.90px;top:108.80px;font-size:12px;line-height:12px;color:#262626;transform:scaleX(0.9738)">Format as</div>
<div class="t " style="left:885.80px;top:124.80px;font-size:12px;line-height:12px;color:#262626;transform:scaleX(0.9377)">Table</div>
<div class="t " style="left:941.60px;top:108.80px;font-size:12px;line-height:12px;color:#262626">Cell</div>
<div class="t " style="left:932.60px;top:124.80px;font-size:12px;line-height:12px;color:#262626;transform:scaleX(0.9514)">Styles</div>
<div class="t " style="left:872.70px;top:143.80px;font-size:12px;line-height:12px;color:#3a3a3a;transform:scaleX(0.8994)">Styles</div>
<div class="t " style="left:995.60px;top:108.80px;font-size:12px;line-height:12px;color:#262626;transform:scaleX(0.9895)">Insert</div>
<div class="t " style="left:1035.80px;top:108.80px;font-size:12px;line-height:12px;color:#262626;transform:scaleX(0.9744)">Delete</div>
<div class="t " style="left:1076.20px;top:108.80px;font-size:12px;line-height:12px;color:#262626">Format</div>
<div class="t " style="left:1041.10px;top:143.80px;font-size:12px;line-height:12px;color:#3a3a3a;transform:scaleX(0.9036)">Cells</div>
<div class="t " style="left:1154.90px;top:74.80px;font-size:12px;line-height:12px;color:#262626;transform:scaleX(1.0170)">AutoSum</div>
<div class="t " style="left:1154.90px;top:97.80px;font-size:12px;line-height:12px;color:#262626;transform:scaleX(0.9851)">Fill</div>
<div class="t " style="left:1154.90px;top:120.80px;font-size:12px;line-height:12px;color:#262626;transform:scaleX(0.9691)">Clear</div>
<div class="t " style="left:1228.20px;top:108.80px;font-size:12px;line-height:12px;color:#262626;transform:scaleX(1.0552)">Sort &amp;</div>
<div class="t " style="left:1228.90px;top:124.80px;font-size:12px;line-height:12px;color:#262626;transform:scaleX(0.9823)">Filter</div>
<div class="t " style="left:1270.60px;top:108.80px;font-size:12px;line-height:12px;color:#262626;transform:scaleX(1.0638)">Find &amp;</div>
<div class="t " style="left:1268.40px;top:124.80px;font-size:12px;line-height:12px;color:#262626;transform:scaleX(0.9652)">Select</div>
<div class="t " style="left:1202.70px;top:143.80px;font-size:12px;line-height:12px;color:#3a3a3a;transform:scaleX(1.0135)">Editing</div>
<div class="t " style="left:9.00px;top:177.29px;font-size:12.6px;line-height:12.6px;color:#3a3a3a;transform:scaleX(1.0191)">A1</div>
<div class="t " style="left:258.50px;top:176.79px;font-size:12.6px;line-height:12.6px;color:#333333;transform:scaleX(0.9754)">CHI TIẾT CHẤM CÔNG</div>
<div class="t h" style="left:71.57px;top:210.46px;font-size:12.4px;line-height:12.4px;color:#000">A</div>
<div class="t h" style="left:211.57px;top:210.46px;font-size:12.4px;line-height:12.4px;color:#000">B</div>
<div class="t h" style="left:351.22px;top:210.46px;font-size:12.4px;line-height:12.4px;color:#000">C</div>
<div class="t h" style="left:456.22px;top:210.46px;font-size:12.4px;line-height:12.4px;color:#000">D</div>
<div class="t h" style="left:551.07px;top:210.46px;font-size:12.4px;line-height:12.4px;color:#000">E</div>
<div class="t h" style="left:621.41px;top:210.46px;font-size:12.4px;line-height:12.4px;color:#000">F</div>
<div class="t h" style="left:676.38px;top:210.46px;font-size:12.4px;line-height:12.4px;color:#000">G</div>
<div class="t h" style="left:732.72px;top:210.46px;font-size:12.4px;line-height:12.4px;color:#000">H</div>
<div class="t h" style="left:791.47px;top:210.46px;font-size:12.4px;line-height:12.4px;color:#000">I</div>
<div class="t h" style="left:846.10px;top:210.46px;font-size:12.4px;line-height:12.4px;color:#000">J</div>
<div class="t h" style="left:901.07px;top:210.46px;font-size:12.4px;line-height:12.4px;color:#000">K</div>
<div class="t h" style="left:957.75px;top:210.46px;font-size:12.4px;line-height:12.4px;color:#000">L</div>
<div class="t h" style="left:1012.04px;top:210.46px;font-size:12.4px;line-height:12.4px;color:#000">M</div>
<div class="t h" style="left:1068.72px;top:210.46px;font-size:12.4px;line-height:12.4px;color:#000">N</div>
<div class="t h" style="left:1117.38px;top:210.46px;font-size:12.4px;line-height:12.4px;color:#000">O</div>
<div class="t h" style="left:1160.07px;top:210.46px;font-size:12.4px;line-height:12.4px;color:#000">P</div>
<div class="t h" style="left:1201.38px;top:210.46px;font-size:12.4px;line-height:12.4px;color:#000">Q</div>
<div class="t h" style="left:1250.72px;top:210.46px;font-size:12.4px;line-height:12.4px;color:#000">R</div>
<div class="t h" style="left:1307.07px;top:210.46px;font-size:12.4px;line-height:12.4px;color:#000">S</div>
<div class="t h" style="left:1363.41px;top:210.46px;font-size:12.4px;line-height:12.4px;color:#000">T</div>
<div class="t h" style="left:1418.72px;top:210.46px;font-size:12.4px;line-height:12.4px;color:#000">U</div>
<div class="t h" style="left:6.75px;top:231.66px;font-size:12.4px;line-height:12.4px;color:#000">1</div>
<div class="t h" style="left:6.75px;top:251.66px;font-size:12.4px;line-height:12.4px;color:#000">2</div>
<div class="t h" style="left:6.75px;top:291.66px;font-size:12.4px;line-height:12.4px;color:#000">3</div>
<div class="t h" style="left:6.75px;top:311.66px;font-size:12.4px;line-height:12.4px;color:#000">4</div>
<div class="t h" style="left:6.75px;top:331.66px;font-size:12.4px;line-height:12.4px;color:#000">5</div>
<div class="t h" style="left:6.75px;top:351.66px;font-size:12.4px;line-height:12.4px;color:#000">6</div>
<div class="t h" style="left:6.75px;top:371.66px;font-size:12.4px;line-height:12.4px;color:#000">7</div>
<div class="t h" style="left:6.75px;top:391.66px;font-size:12.4px;line-height:12.4px;color:#000">8</div>
<div class="t h" style="left:6.75px;top:411.66px;font-size:12.4px;line-height:12.4px;color:#000">9</div>
<div class="t h" style="left:3.30px;top:431.66px;font-size:12.4px;line-height:12.4px;color:#000">10</div>
<div class="t h" style="left:3.76px;top:451.66px;font-size:12.4px;line-height:12.4px;color:#000">11</div>
<div class="t h" style="left:3.30px;top:471.66px;font-size:12.4px;line-height:12.4px;color:#000">12</div>
<div class="t h" style="left:3.30px;top:491.66px;font-size:12.4px;line-height:12.4px;color:#000">13</div>
<div class="t h" style="left:3.30px;top:511.66px;font-size:12.4px;line-height:12.4px;color:#000">14</div>
<div class="t h" style="left:3.30px;top:531.66px;font-size:12.4px;line-height:12.4px;color:#000">15</div>
<div class="t h" style="left:3.30px;top:551.66px;font-size:12.4px;line-height:12.4px;color:#000">16</div>
<div class="t h" style="left:3.30px;top:571.66px;font-size:12.4px;line-height:12.4px;color:#000">17</div>
<div class="t h" style="left:3.30px;top:591.66px;font-size:12.4px;line-height:12.4px;color:#000">18</div>
<div class="t h" style="left:3.30px;top:611.66px;font-size:12.4px;line-height:12.4px;color:#000">19</div>
<div class="t h" style="left:3.30px;top:631.66px;font-size:12.4px;line-height:12.4px;color:#000">20</div>
<div class="t h" style="left:3.30px;top:651.66px;font-size:12.4px;line-height:12.4px;color:#000">21</div>
<div class="t h" style="left:3.30px;top:671.66px;font-size:12.4px;line-height:12.4px;color:#000">22</div>
<div class="t h" style="left:3.30px;top:691.66px;font-size:12.4px;line-height:12.4px;color:#000">23</div>
<div class="t h" style="left:3.30px;top:711.66px;font-size:12.4px;line-height:12.4px;color:#000">24</div>
<div class="t g" style="left:664.30px;top:230.96px;font-size:12.4px;line-height:12.4px;color:#000;font-weight:bold;transform:scaleX(1.0869)">CHI TIẾT CHẤM CÔNG</div>
<div class="t g" style="left:613.80px;top:249.96px;font-size:12.4px;line-height:12.4px;color:#000;font-weight:bold;transform:scaleX(1.0250)">Từ ngày 01-10-2019 đến ngày 30-10-2019</div>
<div class="t g" style="left:41.60px;top:280.96px;font-size:12.4px;line-height:12.4px;color:#000;font-weight:bold;transform:scaleX(1.1356)">Mã N.Viên</div>
<div class="t g" style="left:179.50px;top:280.96px;font-size:12.4px;line-height:12.4px;color:#000;font-weight:bold;transform:scaleX(1.0907)">Tên N.Viên</div>
<div class="t g" style="left:321.80px;top:280.96px;font-size:12.4px;line-height:12.4px;color:#000;font-weight:bold;transform:scaleX(1.0201)">Phòng ban</div>
<div class="t g" style="left:434.90px;top:280.96px;font-size:12.4px;line-height:12.4px;color:#000;font-weight:bold;transform:scaleX(0.9901)">Chức vụ</div>
<div class="t g" style="left:538.90px;top:280.96px;font-size:12.4px;line-height:12.4px;color:#000;font-weight:bold;transform:scaleX(1.0491)">Ngày</div>
<div class="t g" style="left:611.70px;top:280.96px;font-size:12.4px;line-height:12.4px;color:#000;font-weight:bold;transform:scaleX(1.0363)">Thứ</div>
<div class="t g" style="left:668.00px;top:280.96px;font-size:12.4px;line-height:12.4px;color:#000;font-weight:bold;transform:scaleX(1.0997)">Vào</div>
<div class="t g" style="left:728.60px;top:280.96px;font-size:12.4px;line-height:12.4px;color:#000;font-weight:bold;transform:scaleX(0.9657)">Ra</div>
<div class="t g" style="left:776.60px;top:280.96px;font-size:12.4px;line-height:12.4px;color:#000;font-weight:bold;transform:scaleX(1.0109)">Công</div>
<div class="t g" style="left:835.50px;top:280.96px;font-size:12.4px;line-height:12.4px;color:#000;font-weight:bold;transform:scaleX(1.0827)">Giờ</div>
<div class="t g" style="left:884.00px;top:280.96px;font-size:12.4px;line-height:12.4px;color:#000;font-weight:bold;transform:scaleX(1.0105)">Công+</div>
<div class="t g" style="left:945.00px;top:280.96px;font-size:12.4px;line-height:12.4px;color:#000;font-weight:bold;transform:scaleX(1.0981)">Giờ+</div>
<div class="t g" style="left:993.20px;top:280.96px;font-size:12.4px;line-height:12.4px;color:#000;font-weight:bold;transform:scaleX(1.1115)">Vào trễ</div>
<div class="t g" style="left:1048.90px;top:280.96px;font-size:12.4px;line-height:12.4px;color:#000;font-weight:bold">Ra sớm</div>
<div class="t g" style="left:1109.20px;top:280.96px;font-size:12.4px;line-height:12.4px;color:#000;font-weight:bold;transform:scaleX(1.0119)">TC1</div>
<div class="t g" style="left:1150.90px;top:280.96px;font-size:12.4px;line-height:12.4px;color:#000;font-weight:bold">TC2</div>
<div class="t g" style="left:1192.70px;top:280.96px;font-size:12.4px;line-height:12.4px;color:#000;font-weight:bold;transform:scaleX(1.0161)">TC3</div>
<div class="t g" style="left:1234.50px;top:280.96px;font-size:12.4px;line-height:12.4px;color:#000;font-weight:bold;transform:scaleX(1.0085)">Tên ca</div>
<div class="t g" style="left:1289.70px;top:280.96px;font-size:12.4px;line-height:12.4px;color:#000;font-weight:bold;transform:scaleX(1.0693)">K.hiệu</div>
<div class="t g" style="left:1340.30px;top:280.96px;font-size:12.4px;line-height:12.4px;color:#000;font-weight:bold;transform:scaleX(1.0567)">K.hiệu +</div>
<div class="t g" style="left:1405.60px;top:271.46px;font-size:12.4px;line-height:12.4px;color:#000;font-weight:bold;transform:scaleX(1.0237)">Tổng</div>
<div class="t g" style="left:1411.00px;top:291.46px;font-size:12.4px;line-height:12.4px;color:#000;font-weight:bold;transform:scaleX(1.0591)">giờ</div>
<div class="t g" style="left:24.30px;top:311.46px;font-size:12.4px;line-height:12.4px;color:#000;transform:scaleX(1.0270)">00129</div>
<div class="t g" style="left:129.90px;top:311.46px;font-size:12.4px;line-height:12.4px;color:#000;transform:scaleX(1.0952)">Nguyễn văn Đến</div>
<div class="t g" style="left:304.80px;top:311.46px;font-size:12.4px;line-height:12.4px;color:#000;transform:scaleX(1.1109)">Văn phòng</div>
<div class="t g" style="left:409.70px;top:311.46px;font-size:12.4px;line-height:12.4px;color:#000;transform:scaleX(1.0607)">Chưa sắp xếp</div>
<div class="t g" style="left:527.10px;top:311.46px;font-size:12.4px;line-height:12.4px;color:#000;transform:scaleX(1.0585)">01-10-2019</div>
<div class="t g" style="left:598.30px;top:311.46px;font-size:12.4px;line-height:12.4px;color:#000;transform:scaleX(1.0400)">T.3</div>
<div class="t g" style="left:785.94px;top:311.46px;font-size:12.4px;line-height:12.4px;color:#000;transform:scaleX(1.0400)">0,000</div>
<div class="t g" style="left:841.94px;top:311.46px;font-size:12.4px;line-height:12.4px;color:#000;transform:scaleX(1.0400)">0,000</div>
<div class="t g" style="left:897.94px;top:311.46px;font-size:12.4px;line-height:12.4px;color:#000;transform:scaleX(1.0400)">1,000</div>
<div class="t g" style="left:953.94px;top:311.46px;font-size:12.4px;line-height:12.4px;color:#000;transform:scaleX(1.0400)">8,000</div>
<div class="t g" style="left:1035.02px;top:311.46px;font-size:12.4px;line-height:12.4px;color:#000;transform:scaleX(1.0400)">0</div>
<div class="t g" style="left:1091.02px;top:311.46px;font-size:12.4px;line-height:12.4px;color:#000;transform:scaleX(1.0400)">0</div>
<div class="t g" style="left:1107.94px;top:311.46px;font-size:12.4px;line-height:12.4px;color:#000;transform:scaleX(1.0400)">0,000</div>
<div class="t g" style="left:1149.94px;top:311.46px;font-size:12.4px;line-height:12.4px;color:#000;transform:scaleX(1.0400)">0,000</div>
<div class="t g" style="left:1191.94px;top:311.46px;font-size:12.4px;line-height:12.4px;color:#000;transform:scaleX(1.0400)">0,000</div>
<div class="t g" style="left:1228.30px;top:311.46px;font-size:12.4px;line-height:12.4px;color:#000;transform:scaleX(1.0400)">--</div>
<div class="t g" style="left:1284.30px;top:311.46px;font-size:12.4px;line-height:12.4px;color:#000;transform:scaleX(1.0400)">V</div>
<div class="t g" style="left:1340.30px;top:311.46px;font-size:12.4px;line-height:12.4px;color:#000;transform:scaleX(1.0400)">V</div>
<div class="t g" style="left:1415.94px;top:311.46px;font-size:12.4px;line-height:12.4px;color:#000;transform:scaleX(1.0400)">0,000</div>
<div class="t g" style="left:24.30px;top:331.46px;font-size:12.4px;line-height:12.4px;color:#000;transform:scaleX(1.0270)">00129</div>
<div class="t g" style="left:129.90px;top:331.46px;font-size:12.4px;line-height:12.4px;color:#000;transform:scaleX(1.0952)">Nguyễn văn Đến</div>
<div class="t g" style="left:304.80px;top:331.46px;font-size:12.4px;line-height:12.4px;color:#000;transform:scaleX(1.1109)">Văn phòng</div>
<div class="t g" style="left:409.70px;top:331.46px;font-size:12.4px;line-height:12.4px;color:#000;transform:scaleX(1.0607)">Chưa sắp xếp</div>
<div class="t g" style="left:527.10px;top:331.46px;font-size:12.4px;line-height:12.4px;color:#000;transform:scaleX(1.0585)">02-10-2019</div>
<div class="t g" style="left:598.30px;top:331.46px;font-size:12.4px;line-height:12.4px;color:#000;transform:scaleX(1.0400)">T.4</div>
<div class="t g" style="left:654.30px;top:331.46px;font-size:12.4px;line-height:12.4px;color:#000;transform:scaleX(1.0400)">07:30</div>
<div class="t g" style="left:785.94px;top:331.46px;font-size:12.4px;line-height:12.4px;color:#000;transform:scaleX(1.0400)">0,000</div>
<div class="t g" style="left:841.94px;top:331.46px;font-size:12.4px;line-height:12.4px;color:#000;transform:scaleX(1.0400)">0,000</div>
<div class="t g" style="left:897.94px;top:331.46px;font-size:12.4px;line-height:12.4px;color:#000;transform:scaleX(1.0400)">0,000</div>
<div class="t g" style="left:953.94px;top:331.46px;font-size:12.4px;line-height:12.4px;color:#000;transform:scaleX(1.0400)">0,000</div>
<div class="t g" style="left:1035.02px;top:331.46px;font-size:12.4px;line-height:12.4px;color:#000;transform:scaleX(1.0400)">0</div>
<div class="t g" style="left:1091.02px;top:331.46px;font-size:12.4px;line-height:12.4px;color:#000;transform:scaleX(1.0400)">0</div>
<div class="t g" style="left:1107.94px;top:331.46px;font-size:12.4px;line-height:12.4px;color:#000;transform:scaleX(1.0400)">0,000</div>
<div class="t g" style="left:1149.94px;top:331.46px;font-size:12.4px;line-height:12.4px;color:#000;transform:scaleX(1.0400)">0,000</div>
<div class="t g" style="left:1191.94px;top:331.46px;font-size:12.4px;line-height:12.4px;color:#000;transform:scaleX(1.0400)">0,000</div>
<div class="t g" style="left:1228.30px;top:331.46px;font-size:12.4px;line-height:12.4px;color:#000;transform:scaleX(1.0400)">HC</div>
<div class="t g" style="left:1284.30px;top:331.46px;font-size:12.4px;line-height:12.4px;color:#000;transform:scaleX(1.0400)">KR</div>
<div class="t g" style="left:1415.94px;top:331.46px;font-size:12.4px;line-height:12.4px;color:#000;transform:scaleX(1.0400)">0,000</div>
<div class="t g" style="left:24.30px;top:351.46px;font-size:12.4px;line-height:12.4px;color:#000;transform:scaleX(1.0270)">00129</div>
<div class="t g" style="left:129.90px;top:351.46px;font-size:12.4px;line-height:12.4px;color:#000;transform:scaleX(1.0952)">Nguyễn văn Đến</div>
<div class="t g" style="left:304.80px;top:351.46px;font-size:12.4px;line-height:12.4px;color:#000;transform:scaleX(1.1109)">Văn phòng</div>
<div class="t g" style="left:409.70px;top:351.46px;font-size:12.4px;line-height:12.4px;color:#000;transform:scaleX(1.0607)">Chưa sắp xếp</div>
<div class="t g" style="left:527.10px;top:351.46px;font-size:12.4px;line-height:12.4px;color:#000;transform:scaleX(1.0585)">03-10-2019</div>
<div class="t g" style="left:598.30px;top:351.46px;font-size:12.4px;line-height:12.4px;color:#000;transform:scaleX(1.0400)">T.5</div>
<div class="t g" style="left:785.94px;top:351.46px;font-size:12.4px;line-height:12.4px;color:#000;transform:scaleX(1.0400)">0,000</div>
<div class="t g" style="left:841.94px;top:351.46px;font-size:12.4px;line-height:12.4px;color:#000;transform:scaleX(1.0400)">0,000</div>
<div class="t g" style="left:897.94px;top:351.46px;font-size:12.4px;line-height:12.4px;color:#000;transform:scaleX(1.0400)">1,000</div>
<div class="t g" style="left:953.94px;top:351.46px;font-size:12.4px;line-height:12.4px;color:#000;transform:scaleX(1.0400)">8,000</div>
<div class="t g" style="left:1035.02px;top:351.46px;font-size:12.4px;line-height:12.4px;color:#000;transform:scaleX(1.0400)">0</div>
<div class="t g" style="left:1091.02px;top:351.46px;font-size:12.4px;line-height:12.4px;color:#000;transform:scaleX(1.0400)">0</div>
<div class="t g" style="left:1107.94px;top:351.46px;font-size:12.4px;line-height:12.4px;color:#000;transform:scaleX(1.0400)">0,000</div>
<div class="t g" style="left:1149.94px;top:351.46px;font-size:12.4px;line-height:12.4px;color:#000;transform:scaleX(1.0400)">0,000</div>
<div class="t g" style="left:1191.94px;top:351.46px;font-size:12.4px;line-height:12.4px;color:#000;transform:scaleX(1.0400)">0,000</div>
<div class="t g" style="left:1228.30px;top:351.46px;font-size:12.4px;line-height:12.4px;color:#000;transform:scaleX(1.0400)">--</div>
<div class="t g" style="left:1284.30px;top:351.46px;font-size:12.4px;line-height:12.4px;color:#000;transform:scaleX(1.0400)">V</div>
<div class="t g" style="left:1340.30px;top:351.46px;font-size:12.4px;line-height:12.4px;color:#000;transform:scaleX(1.0400)">V</div>
<div class="t g" style="left:1415.94px;top:351.46px;font-size:12.4px;line-height:12.4px;color:#000;transform:scaleX(1.0400)">0,000</div>
<div class="t g" style="left:24.30px;top:371.46px;font-size:12.4px;line-height:12.4px;color:#000;transform:scaleX(1.0270)">00129</div>
<div class="t g" style="left:129.90px;top:371.46px;font-size:12.4px;line-height:12.4px;color:#000;transform:scaleX(1.0952)">Nguyễn văn Đến</div>
<div class="t g" style="left:304.80px;top:371.46px;font-size:12.4px;line-height:12.4px;color:#000;transform:scaleX(1.1109)">Văn phòng</div>
<div class="t g" style="left:409.70px;top:371.46px;font-size:12.4px;line-height:12.4px;color:#000;transform:scaleX(1.0607)">Chưa sắp xếp</div>
<div class="t g" style="left:527.10px;top:371.46px;font-size:12.4px;line-height:12.4px;color:#000;transform:scaleX(1.0585)">04-10-2019</div>
<div class="t g" style="left:598.30px;top:371.46px;font-size:12.4px;line-height:12.4px;color:#000;transform:scaleX(1.0400)">T.6</div>
<div class="t g" style="left:785.94px;top:371.46px;font-size:12.4px;line-height:12.4px;color:#000;transform:scaleX(1.0400)">0,000</div>
<div class="t g" style="left:841.94px;top:371.46px;font-size:12.4px;line-height:12.4px;color:#000;transform:scaleX(1.0400)">0,000</div>
<div class="t g" style="left:897.94px;top:371.46px;font-size:12.4px;line-height:12.4px;color:#000;transform:scaleX(1.0400)">1,000</div>
<div class="t g" style="left:953.94px;top:371.46px;font-size:12.4px;line-height:12.4px;color:#000;transform:scaleX(1.0400)">8,000</div>
<div class="t g" style="left:1035.02px;top:371.46px;font-size:12.4px;line-height:12.4px;color:#000;transform:scaleX(1.0400)">0</div>
<div class="t g" style="left:1091.02px;top:371.46px;font-size:12.4px;line-height:12.4px;color:#000;transform:scaleX(1.0400)">0</div>
<div class="t g" style="left:1107.94px;top:371.46px;font-size:12.4px;line-height:12.4px;color:#000;transform:scaleX(1.0400)">0,000</div>
<div class="t g" style="left:1149.94px;top:371.46px;font-size:12.4px;line-height:12.4px;color:#000;transform:scaleX(1.0400)">0,000</div>
<div class="t g" style="left:1191.94px;top:371.46px;font-size:12.4px;line-height:12.4px;color:#000;transform:scaleX(1.0400)">0,000</div>
<div class="t g" style="left:1228.30px;top:371.46px;font-size:12.4px;line-height:12.4px;color:#000;transform:scaleX(1.0400)">--</div>
<div class="t g" style="left:1284.30px;top:371.46px;font-size:12.4px;line-height:12.4px;color:#000;transform:scaleX(1.0400)">V</div>
<div class="t g" style="left:1340.30px;top:371.46px;font-size:12.4px;line-height:12.4px;color:#000;transform:scaleX(1.0400)">V</div>
<div class="t g" style="left:1415.94px;top:371.46px;font-size:12.4px;line-height:12.4px;color:#000;transform:scaleX(1.0400)">0,000</div>
<div class="t g" style="left:24.30px;top:391.46px;font-size:12.4px;line-height:12.4px;color:#000;transform:scaleX(1.0270)">00129</div>
<div class="t g" style="left:129.90px;top:391.46px;font-size:12.4px;line-height:12.4px;color:#000;transform:scaleX(1.0952)">Nguyễn văn Đến</div>
<div class="t g" style="left:304.80px;top:391.46px;font-size:12.4px;line-height:12.4px;color:#000;transform:scaleX(1.1109)">Văn phòng</div>
<div class="t g" style="left:409.70px;top:391.46px;font-size:12.4px;line-height:12.4px;color:#000;transform:scaleX(1.0607)">Chưa sắp xếp</div>
<div class="t g" style="left:527.10px;top:391.46px;font-size:12.4px;line-height:12.4px;color:#000;transform:scaleX(1.0585)">05-10-2019</div>
<div class="t g" style="left:598.30px;top:391.46px;font-size:12.4px;line-height:12.4px;color:#000;transform:scaleX(1.0400)">T.7</div>
<div class="t g" style="left:785.94px;top:391.46px;font-size:12.4px;line-height:12.4px;color:#000;transform:scaleX(1.0400)">0,000</div>
<div class="t g" style="left:841.94px;top:391.46px;font-size:12.4px;line-height:12.4px;color:#000;transform:scaleX(1.0400)">0,000</div>
<div class="t g" style="left:897.94px;top:391.46px;font-size:12.4px;line-height:12.4px;color:#000;transform:scaleX(1.0400)">0,000</div>
<div class="t g" style="left:953.94px;top:391.46px;font-size:12.4px;line-height:12.4px;color:#000;transform:scaleX(1.0400)">0,000</div>
<div class="t g" style="left:1035.02px;top:391.46px;font-size:12.4px;line-height:12.4px;color:#000;transform:scaleX(1.0400)">0</div>
<div class="t g" style="left:1091.02px;top:391.46px;font-size:12.4px;line-height:12.4px;color:#000;transform:scaleX(1.0400)">0</div>
<div class="t g" style="left:1107.94px;top:391.46px;font-size:12.4px;line-height:12.4px;color:#000;transform:scaleX(1.0400)">0,000</div>
<div class="t g" style="left:1149.94px;top:391.46px;font-size:12.4px;line-height:12.4px;color:#000;transform:scaleX(1.0400)">0,000</div>
<div class="t g" style="left:1191.94px;top:391.46px;font-size:12.4px;line-height:12.4px;color:#000;transform:scaleX(1.0400)">0,000</div>
<div class="t g" style="left:1228.30px;top:391.46px;font-size:12.4px;line-height:12.4px;color:#000;transform:scaleX(1.0400)">--</div>
<div class="t g" style="left:1284.30px;top:391.46px;font-size:12.4px;line-height:12.4px;color:#000;transform:scaleX(1.0400)">--</div>
<div class="t g" style="left:1415.94px;top:391.46px;font-size:12.4px;line-height:12.4px;color:#000;transform:scaleX(1.0400)">0,000</div>
<div class="t g" style="left:24.30px;top:411.46px;font-size:12.4px;line-height:12.4px;color:#000;transform:scaleX(1.0270)">00129</div>
<div class="t g" style="left:129.90px;top:411.46px;font-size:12.4px;line-height:12.4px;color:#000;transform:scaleX(1.0952)">Nguyễn văn Đến</div>
<div class="t g" style="left:304.80px;top:411.46px;font-size:12.4px;line-height:12.4px;color:#000;transform:scaleX(1.1109)">Văn phòng</div>
<div class="t g" style="left:409.70px;top:411.46px;font-size:12.4px;line-height:12.4px;color:#000;transform:scaleX(1.0607)">Chưa sắp xếp</div>
<div class="t g" style="left:527.10px;top:411.46px;font-size:12.4px;line-height:12.4px;color:#000;transform:scaleX(1.0585)">06-10-2019</div>
<div class="t g" style="left:598.30px;top:411.46px;font-size:12.4px;line-height:12.4px;color:#000;transform:scaleX(1.0400)">CN</div>
<div class="t g" style="left:785.94px;top:411.46px;font-size:12.4px;line-height:12.4px;color:#000;transform:scaleX(1.0400)">0,000</div>
<div class="t g" style="left:841.94px;top:411.46px;font-size:12.4px;line-height:12.4px;color:#000;transform:scaleX(1.0400)">0,000</div>
<div class="t g" style="left:897.94px;top:411.46px;font-size:12.4px;line-height:12.4px;color:#000;transform:scaleX(1.0400)">1,000</div>
<div class="t g" style="left:953.94px;top:411.46px;font-size:12.4px;line-height:12.4px;color:#000;transform:scaleX(1.0400)">8,000</div>
<div class="t g" style="left:1035.02px;top:411.46px;font-size:12.4px;line-height:12.4px;color:#000;transform:scaleX(1.0400)">0</div>
<div class="t g" style="left:1091.02px;top:411.46px;font-size:12.4px;line-height:12.4px;color:#000;transform:scaleX(1.0400)">0</div>
<div class="t g" style="left:1107.94px;top:411.46px;font-size:12.4px;line-height:12.4px;color:#000;transform:scaleX(1.0400)">0,000</div>
<div class="t g" style="left:1149.94px;top:411.46px;font-size:12.4px;line-height:12.4px;color:#000;transform:scaleX(1.0400)">0,000</div>
<div class="t g" style="left:1191.94px;top:411.46px;font-size:12.4px;line-height:12.4px;color:#000;transform:scaleX(1.0400)">0,000</div>
<div class="t g" style="left:1228.30px;top:411.46px;font-size:12.4px;line-height:12.4px;color:#000;transform:scaleX(1.0400)">--</div>
<div class="t g" style="left:1284.30px;top:411.46px;font-size:12.4px;line-height:12.4px;color:#000;transform:scaleX(1.0400)">V</div>
<div class="t g" style="left:1340.30px;top:411.46px;font-size:12.4px;line-height:12.4px;color:#000;transform:scaleX(1.0400)">V</div>
<div class="t g" style="left:1415.94px;top:411.46px;font-size:12.4px;line-height:12.4px;color:#000;transform:scaleX(1.0400)">0,000</div>
<div class="t g" style="left:24.30px;top:431.46px;font-size:12.4px;line-height:12.4px;color:#000;transform:scaleX(1.0270)">00129</div>
<div class="t g" style="left:129.90px;top:431.46px;font-size:12.4px;line-height:12.4px;color:#000;transform:scaleX(1.0952)">Nguyễn văn Đến</div>
<div class="t g" style="left:304.80px;top:431.46px;font-size:12.4px;line-height:12.4px;color:#000;transform:scaleX(1.1109)">Văn phòng</div>
<div class="t g" style="left:409.70px;top:431.46px;font-size:12.4px;line-height:12.4px;color:#000;transform:scaleX(1.0607)">Chưa sắp xếp</div>
<div class="t g" style="left:527.10px;top:431.46px;font-size:12.4px;line-height:12.4px;color:#000;transform:scaleX(1.0585)">07-10-2019</div>
<div class="t g" style="left:598.30px;top:431.46px;font-size:12.4px;line-height:12.4px;color:#000;transform:scaleX(1.0400)">T.2</div>
<div class="t g" style="left:785.94px;top:431.46px;font-size:12.4px;line-height:12.4px;color:#000;transform:scaleX(1.0400)">0,000</div>
<div class="t g" style="left:841.94px;top:431.46px;font-size:12.4px;line-height:12.4px;color:#000;transform:scaleX(1.0400)">0,000</div>
<div class="t g" style="left:897.94px;top:431.46px;font-size:12.4px;line-height:12.4px;color:#000;transform:scaleX(1.0400)">1,000</div>
<div class="t g" style="left:953.94px;top:431.46px;font-size:12.4px;line-height:12.4px;color:#000;transform:scaleX(1.0400)">8,000</div>
<div class="t g" style="left:1035.02px;top:431.46px;font-size:12.4px;line-height:12.4px;color:#000;transform:scaleX(1.0400)">0</div>
<div class="t g" style="left:1091.02px;top:431.46px;font-size:12.4px;line-height:12.4px;color:#000;transform:scaleX(1.0400)">0</div>
<div class="t g" style="left:1107.94px;top:431.46px;font-size:12.4px;line-height:12.4px;color:#000;transform:scaleX(1.0400)">0,000</div>
<div class="t g" style="left:1149.94px;top:431.46px;font-size:12.4px;line-height:12.4px;color:#000;transform:scaleX(1.0400)">0,000</div>
<div class="t g" style="left:1191.94px;top:431.46px;font-size:12.4px;line-height:12.4px;color:#000;transform:scaleX(1.0400)">0,000</div>
<div class="t g" style="left:1228.30px;top:431.46px;font-size:12.4px;line-height:12.4px;color:#000;transform:scaleX(1.0400)">--</div>
<div class="t g" style="left:1284.30px;top:431.46px;font-size:12.4px;line-height:12.4px;color:#000;transform:scaleX(1.0400)">V</div>
<div class="t g" style="left:1340.30px;top:431.46px;font-size:12.4px;line-height:12.4px;color:#000;transform:scaleX(1.0400)">V</div>
<div class="t g" style="left:1415.94px;top:431.46px;font-size:12.4px;line-height:12.4px;color:#000;transform:scaleX(1.0400)">0,000</div>
<div class="t g" style="left:24.30px;top:451.46px;font-size:12.4px;line-height:12.4px;color:#000;transform:scaleX(1.0270)">00129</div>
<div class="t g" style="left:129.90px;top:451.46px;font-size:12.4px;line-height:12.4px;color:#000;transform:scaleX(1.0952)">Nguyễn văn Đến</div>
<div class="t g" style="left:304.80px;top:451.46px;font-size:12.4px;line-height:12.4px;color:#000;transform:scaleX(1.1109)">Văn phòng</div>
<div class="t g" style="left:409.70px;top:451.46px;font-size:12.4px;line-height:12.4px;color:#000;transform:scaleX(1.0607)">Chưa sắp xếp</div>
<div class="t g" style="left:527.10px;top:451.46px;font-size:12.4px;line-height:12.4px;color:#000;transform:scaleX(1.0585)">08-10-2019</div>
<div class="t g" style="left:598.30px;top:451.46px;font-size:12.4px;line-height:12.4px;color:#000;transform:scaleX(1.0400)">T.3</div>
<div class="t g" style="left:785.94px;top:451.46px;font-size:12.4px;line-height:12.4px;color:#000;transform:scaleX(1.0400)">0,000</div>
<div class="t g" style="left:841.94px;top:451.46px;font-size:12.4px;line-height:12.4px;color:#000;transform:scaleX(1.0400)">0,000</div>
<div class="t g" style="left:897.94px;top:451.46px;font-size:12.4px;line-height:12.4px;color:#000;transform:scaleX(1.0400)">1,000</div>
<div class="t g" style="left:953.94px;top:451.46px;font-size:12.4px;line-height:12.4px;color:#000;transform:scaleX(1.0400)">8,000</div>
<div class="t g" style="left:1035.02px;top:451.46px;font-size:12.4px;line-height:12.4px;color:#000;transform:scaleX(1.0400)">0</div>
<div class="t g" style="left:1091.02px;top:451.46px;font-size:12.4px;line-height:12.4px;color:#000;transform:scaleX(1.0400)">0</div>
<div class="t g" style="left:1107.94px;top:451.46px;font-size:12.4px;line-height:12.4px;color:#000;transform:scaleX(1.0400)">0,000</div>
<div class="t g" style="left:1149.94px;top:451.46px;font-size:12.4px;line-height:12.4px;color:#000;transform:scaleX(1.0400)">0,000</div>
<div class="t g" style="left:1191.94px;top:451.46px;font-size:12.4px;line-height:12.4px;color:#000;transform:scaleX(1.0400)">0,000</div>
<div class="t g" style="left:1228.30px;top:451.46px;font-size:12.4px;line-height:12.4px;color:#000;transform:scaleX(1.0400)">--</div>
<div class="t g" style="left:1284.30px;top:451.46px;font-size:12.4px;line-height:12.4px;color:#000;transform:scaleX(1.0400)">V</div>
<div class="t g" style="left:1340.30px;top:451.46px;font-size:12.4px;line-height:12.4px;color:#000;transform:scaleX(1.0400)">V</div>
<div class="t g" style="left:1415.94px;top:451.46px;font-size:12.4px;line-height:12.4px;color:#000;transform:scaleX(1.0400)">0,000</div>
<div class="t g" style="left:24.30px;top:471.46px;font-size:12.4px;line-height:12.4px;color:#000;transform:scaleX(1.0270)">00129</div>
<div class="t g" style="left:129.90px;top:471.46px;font-size:12.4px;line-height:12.4px;color:#000;transform:scaleX(1.0952)">Nguyễn văn Đến</div>
<div class="t g" style="left:304.80px;top:471.46px;font-size:12.4px;line-height:12.4px;color:#000;transform:scaleX(1.1109)">Văn phòng</div>
<div class="t g" style="left:409.70px;top:471.46px;font-size:12.4px;line-height:12.4px;color:#000;transform:scaleX(1.0607)">Chưa sắp xếp</div>
<div class="t g" style="left:527.10px;top:471.46px;font-size:12.4px;line-height:12.4px;color:#000;transform:scaleX(1.0585)">09-10-2019</div>
<div class="t g" style="left:598.30px;top:471.46px;font-size:12.4px;line-height:12.4px;color:#000;transform:scaleX(1.0400)">T.4</div>
<div class="t g" style="left:785.94px;top:471.46px;font-size:12.4px;line-height:12.4px;color:#000;transform:scaleX(1.0400)">0,000</div>
<div class="t g" style="left:841.94px;top:471.46px;font-size:12.4px;line-height:12.4px;color:#000;transform:scaleX(1.0400)">0,000</div>
<div class="t g" style="left:897.94px;top:471.46px;font-size:12.4px;line-height:12.4px;color:#000;transform:scaleX(1.0400)">1,000</div>
<div class="t g" style="left:953.94px;top:471.46px;font-size:12.4px;line-height:12.4px;color:#000;transform:scaleX(1.0400)">8,000</div>
<div class="t g" style="left:1035.02px;top:471.46px;font-size:12.4px;line-height:12.4px;color:#000;transform:scaleX(1.0400)">0</div>
<div class="t g" style="left:1091.02px;top:471.46px;font-size:12.4px;line-height:12.4px;color:#000;transform:scaleX(1.0400)">0</div>
<div class="t g" style="left:1107.94px;top:471.46px;font-size:12.4px;line-height:12.4px;color:#000;transform:scaleX(1.0400)">0,000</div>
<div class="t g" style="left:1149.94px;top:471.46px;font-size:12.4px;line-height:12.4px;color:#000;transform:scaleX(1.0400)">0,000</div>
<div class="t g" style="left:1191.94px;top:471.46px;font-size:12.4px;line-height:12.4px;color:#000;transform:scaleX(1.0400)">0,000</div>
<div class="t g" style="left:1228.30px;top:471.46px;font-size:12.4px;line-height:12.4px;color:#000;transform:scaleX(1.0400)">--</div>
<div class="t g" style="left:1284.30px;top:471.46px;font-size:12.4px;line-height:12.4px;color:#000;transform:scaleX(1.0400)">V</div>
<div class="t g" style="left:1340.30px;top:471.46px;font-size:12.4px;line-height:12.4px;color:#000;transform:scaleX(1.0400)">V</div>
<div class="t g" style="left:1415.94px;top:471.46px;font-size:12.4px;line-height:12.4px;color:#000;transform:scaleX(1.0400)">0,000</div>
<div class="t g" style="left:24.30px;top:491.46px;font-size:12.4px;line-height:12.4px;color:#000;transform:scaleX(1.0270)">00129</div>
<div class="t g" style="left:129.90px;top:491.46px;font-size:12.4px;line-height:12.4px;color:#000;transform:scaleX(1.0952)">Nguyễn văn Đến</div>
<div class="t g" style="left:304.80px;top:491.46px;font-size:12.4px;line-height:12.4px;color:#000;transform:scaleX(1.1109)">Văn phòng</div>
<div class="t g" style="left:409.70px;top:491.46px;font-size:12.4px;line-height:12.4px;color:#000;transform:scaleX(1.0607)">Chưa sắp xếp</div>
<div class="t g" style="left:527.10px;top:491.46px;font-size:12.4px;line-height:12.4px;color:#000;transform:scaleX(1.0585)">10-10-2019</div>
<div class="t g" style="left:598.30px;top:491.46px;font-size:12.4px;line-height:12.4px;color:#000;transform:scaleX(1.0400)">T.5</div>
<div class="t g" style="left:654.30px;top:491.46px;font-size:12.4px;line-height:12.4px;color:#000;transform:scaleX(1.0400)">07:19</div>
<div class="t g" style="left:710.30px;top:491.46px;font-size:12.4px;line-height:12.4px;color:#000;transform:scaleX(1.0400)">18:05</div>
<div class="t g" style="left:785.94px;top:491.46px;font-size:12.4px;line-height:12.4px;color:#000;transform:scaleX(1.0400)">1,000</div>
<div class="t g" style="left:841.94px;top:491.46px;font-size:12.4px;line-height:12.4px;color:#000;transform:scaleX(1.0400)">8,000</div>
<div class="t g" style="left:897.94px;top:491.46px;font-size:12.4px;line-height:12.4px;color:#000;transform:scaleX(1.0400)">0,000</div>
<div class="t g" style="left:953.94px;top:491.46px;font-size:12.4px;line-height:12.4px;color:#000;transform:scaleX(1.0400)">0,000</div>
<div class="t g" style="left:1035.02px;top:491.46px;font-size:12.4px;line-height:12.4px;color:#000;transform:scaleX(1.0400)">0</div>
<div class="t g" style="left:1091.02px;top:491.46px;font-size:12.4px;line-height:12.4px;color:#000;transform:scaleX(1.0400)">0</div>
<div class="t g" style="left:1107.94px;top:491.46px;font-size:12.4px;line-height:12.4px;color:#000;transform:scaleX(1.0400)">1,583</div>
<div class="t g" style="left:1149.94px;top:491.46px;font-size:12.4px;line-height:12.4px;color:#000;transform:scaleX(1.0400)">0,000</div>
<div class="t g" style="left:1191.94px;top:491.46px;font-size:12.4px;line-height:12.4px;color:#000;transform:scaleX(1.0400)">0,000</div>
<div class="t g" style="left:1228.30px;top:491.46px;font-size:12.4px;line-height:12.4px;color:#000;transform:scaleX(1.0400)">HC</div>
<div class="t g" style="left:1284.30px;top:491.46px;font-size:12.4px;line-height:12.4px;color:#000;transform:scaleX(1.0400)">X</div>
<div class="t g" style="left:1415.94px;top:491.46px;font-size:12.4px;line-height:12.4px;color:#000;transform:scaleX(1.0400)">9,583</div>
<div class="t g" style="left:24.30px;top:511.46px;font-size:12.4px;line-height:12.4px;color:#000;transform:scaleX(1.0270)">00129</div>
<div class="t g" style="left:129.90px;top:511.46px;font-size:12.4px;line-height:12.4px;color:#000;transform:scaleX(1.0952)">Nguyễn văn Đến</div>
<div class="t g" style="left:304.80px;top:511.46px;font-size:12.4px;line-height:12.4px;color:#000;transform:scaleX(1.1109)">Văn phòng</div>
<div class="t g" style="left:409.70px;top:511.46px;font-size:12.4px;line-height:12.4px;color:#000;transform:scaleX(1.0607)">Chưa sắp xếp</div>
<div class="t g" style="left:527.10px;top:511.46px;font-size:12.4px;line-height:12.4px;color:#000;transform:scaleX(1.0741)">11-10-2019</div>
<div class="t g" style="left:598.30px;top:511.46px;font-size:12.4px;line-height:12.4px;color:#000;transform:scaleX(1.0400)">T.6</div>
<div class="t g" style="left:654.30px;top:511.46px;font-size:12.4px;line-height:12.4px;color:#000;transform:scaleX(1.0400)">07:14</div>
<div class="t g" style="left:710.30px;top:511.46px;font-size:12.4px;line-height:12.4px;color:#000;transform:scaleX(1.0400)">18:07</div>
<div class="t g" style="left:785.94px;top:511.46px;font-size:12.4px;line-height:12.4px;color:#000;transform:scaleX(1.0400)">1,000</div>
<div class="t g" style="left:841.94px;top:511.46px;font-size:12.4px;line-height:12.4px;color:#000;transform:scaleX(1.0400)">8,000</div>
<div class="t g" style="left:897.94px;top:511.46px;font-size:12.4px;line-height:12.4px;color:#000;transform:scaleX(1.0400)">0,000</div>
<div class="t g" style="left:953.94px;top:511.46px;font-size:12.4px;line-height:12.4px;color:#000;transform:scaleX(1.0400)">0,000</div>
<div class="t g" style="left:1035.02px;top:511.46px;font-size:12.4px;line-height:12.4px;color:#000;transform:scaleX(1.0400)">0</div>
<div class="t g" style="left:1091.02px;top:511.46px;font-size:12.4px;line-height:12.4px;color:#000;transform:scaleX(1.0400)">0</div>
<div class="t g" style="left:1107.94px;top:511.46px;font-size:12.4px;line-height:12.4px;color:#000;transform:scaleX(1.0400)">1,617</div>
<div class="t g" style="left:1149.94px;top:511.46px;font-size:12.4px;line-height:12.4px;color:#000;transform:scaleX(1.0400)">0,000</div>
<div class="t g" style="left:1191.94px;top:511.46px;font-size:12.4px;line-height:12.4px;color:#000;transform:scaleX(1.0400)">0,000</div>
<div class="t g" style="left:1228.30px;top:511.46px;font-size:12.4px;line-height:12.4px;color:#000;transform:scaleX(1.0400)">HC</div>
<div class="t g" style="left:1284.30px;top:511.46px;font-size:12.4px;line-height:12.4px;color:#000;transform:scaleX(1.0400)">X</div>
<div class="t g" style="left:1415.94px;top:511.46px;font-size:12.4px;line-height:12.4px;color:#000;transform:scaleX(1.0400)">9,617</div>
<div class="t g" style="left:24.30px;top:531.46px;font-size:12.4px;line-height:12.4px;color:#000;transform:scaleX(1.0270)">00129</div>
<div class="t g" style="left:129.90px;top:531.46px;font-size:12.4px;line-height:12.4px;color:#000;transform:scaleX(1.0952)">Nguyễn văn Đến</div>
<div class="t g" style="left:304.80px;top:531.46px;font-size:12.4px;line-height:12.4px;color:#000;transform:scaleX(1.1109)">Văn phòng</div>
<div class="t g" style="left:409.70px;top:531.46px;font-size:12.4px;line-height:12.4px;color:#000;transform:scaleX(1.0607)">Chưa sắp xếp</div>
<div class="t g" style="left:527.10px;top:531.46px;font-size:12.4px;line-height:12.4px;color:#000;transform:scaleX(1.0585)">12-10-2019</div>
<div class="t g" style="left:598.30px;top:531.46px;font-size:12.4px;line-height:12.4px;color:#000;transform:scaleX(1.0400)">T.7</div>
<div class="t g" style="left:654.30px;top:531.46px;font-size:12.4px;line-height:12.4px;color:#000;transform:scaleX(1.0400)">07:16</div>
<div class="t g" style="left:710.30px;top:531.46px;font-size:12.4px;line-height:12.4px;color:#000;transform:scaleX(1.0400)">16:33</div>
<div class="t g" style="left:785.94px;top:531.46px;font-size:12.4px;line-height:12.4px;color:#000;transform:scaleX(1.0400)">1,000</div>
<div class="t g" style="left:841.94px;top:531.46px;font-size:12.4px;line-height:12.4px;color:#000;transform:scaleX(1.0400)">8,000</div>
<div class="t g" style="left:897.94px;top:531.46px;font-size:12.4px;line-height:12.4px;color:#000;transform:scaleX(1.0400)">0,000</div>
<div class="t g" style="left:953.94px;top:531.46px;font-size:12.4px;line-height:12.4px;color:#000;transform:scaleX(1.0400)">0,000</div>
<div class="t g" style="left:1035.02px;top:531.46px;font-size:12.4px;line-height:12.4px;color:#000;transform:scaleX(1.0400)">0</div>
<div class="t g" style="left:1091.02px;top:531.46px;font-size:12.4px;line-height:12.4px;color:#000;transform:scaleX(1.0400)">0</div>
<div class="t g" style="left:1107.94px;top:531.46px;font-size:12.4px;line-height:12.4px;color:#000;transform:scaleX(1.0400)">0,000</div>
<div class="t g" style="left:1149.94px;top:531.46px;font-size:12.4px;line-height:12.4px;color:#000;transform:scaleX(1.0400)">0,000</div>
<div class="t g" style="left:1191.94px;top:531.46px;font-size:12.4px;line-height:12.4px;color:#000;transform:scaleX(1.0400)">0,000</div>
<div class="t g" style="left:1228.30px;top:531.46px;font-size:12.4px;line-height:12.4px;color:#000;transform:scaleX(1.0400)">HC</div>
<div class="t g" style="left:1284.30px;top:531.46px;font-size:12.4px;line-height:12.4px;color:#000;transform:scaleX(1.0400)">X</div>
<div class="t g" style="left:1415.94px;top:531.46px;font-size:12.4px;line-height:12.4px;color:#000;transform:scaleX(1.0400)">8,000</div>
<div class="t g" style="left:24.30px;top:551.46px;font-size:12.4px;line-height:12.4px;color:#000;transform:scaleX(1.0270)">00129</div>
<div class="t g" style="left:129.90px;top:551.46px;font-size:12.4px;line-height:12.4px;color:#000;transform:scaleX(1.0952)">Nguyễn văn Đến</div>
<div class="t g" style="left:304.80px;top:551.46px;font-size:12.4px;line-height:12.4px;color:#000;transform:scaleX(1.1109)">Văn phòng</div>
<div class="t g" style="left:409.70px;top:551.46px;font-size:12.4px;line-height:12.4px;color:#000;transform:scaleX(1.0607)">Chưa sắp xếp</div>
<div class="t g" style="left:527.10px;top:551.46px;font-size:12.4px;line-height:12.4px;color:#000;transform:scaleX(1.0585)">13-10-2019</div>
<div class="t g" style="left:598.30px;top:551.46px;font-size:12.4px;line-height:12.4px;color:#000;transform:scaleX(1.0400)">CN</div>
<div class="t g" style="left:785.94px;top:551.46px;font-size:12.4px;line-height:12.4px;color:#000;transform:scaleX(1.0400)">0,000</div>
<div class="t g" style="left:841.94px;top:551.46px;font-size:12.4px;line-height:12.4px;color:#000;transform:scaleX(1.0400)">0,000</div>
<div class="t g" style="left:897.94px;top:551.46px;font-size:12.4px;line-height:12.4px;color:#000;transform:scaleX(1.0400)">1,000</div>
<div class="t g" style="left:953.94px;top:551.46px;font-size:12.4px;line-height:12.4px;color:#000;transform:scaleX(1.0400)">8,000</div>
<div class="t g" style="left:1035.02px;top:551.46px;font-size:12.4px;line-height:12.4px;color:#000;transform:scaleX(1.0400)">0</div>
<div class="t g" style="left:1091.02px;top:551.46px;font-size:12.4px;line-height:12.4px;color:#000;transform:scaleX(1.0400)">0</div>
<div class="t g" style="left:1107.94px;top:551.46px;font-size:12.4px;line-height:12.4px;color:#000;transform:scaleX(1.0400)">0,000</div>
<div class="t g" style="left:1149.94px;top:551.46px;font-size:12.4px;line-height:12.4px;color:#000;transform:scaleX(1.0400)">0,000</div>
<div class="t g" style="left:1191.94px;top:551.46px;font-size:12.4px;line-height:12.4px;color:#000;transform:scaleX(1.0400)">0,000</div>
<div class="t g" style="left:1228.30px;top:551.46px;font-size:12.4px;line-height:12.4px;color:#000;transform:scaleX(1.0400)">--</div>
<div class="t g" style="left:1284.30px;top:551.46px;font-size:12.4px;line-height:12.4px;color:#000;transform:scaleX(1.0400)">V</div>
<div class="t g" style="left:1340.30px;top:551.46px;font-size:12.4px;line-height:12.4px;color:#000;transform:scaleX(1.0400)">V</div>
<div class="t g" style="left:1415.94px;top:551.46px;font-size:12.4px;line-height:12.4px;color:#000;transform:scaleX(1.0400)">0,000</div>
<div class="t g" style="left:24.30px;top:571.46px;font-size:12.4px;line-height:12.4px;color:#000;transform:scaleX(1.0270)">00129</div>
<div class="t g" style="left:129.90px;top:571.46px;font-size:12.4px;line-height:12.4px;color:#000;transform:scaleX(1.0952)">Nguyễn văn Đến</div>
<div class="t g" style="left:304.80px;top:571.46px;font-size:12.4px;line-height:12.4px;color:#000;transform:scaleX(1.1109)">Văn phòng</div>
<div class="t g" style="left:409.70px;top:571.46px;font-size:12.4px;line-height:12.4px;color:#000;transform:scaleX(1.0607)">Chưa sắp xếp</div>
<div class="t g" style="left:527.10px;top:571.46px;font-size:12.4px;line-height:12.4px;color:#000;transform:scaleX(1.0585)">14-10-2019</div>
<div class="t g" style="left:598.30px;top:571.46px;font-size:12.4px;line-height:12.4px;color:#000;transform:scaleX(1.0400)">T.2</div>
<div class="t g" style="left:654.30px;top:571.46px;font-size:12.4px;line-height:12.4px;color:#000;transform:scaleX(1.0400)">07:22</div>
<div class="t g" style="left:710.30px;top:571.46px;font-size:12.4px;line-height:12.4px;color:#000;transform:scaleX(1.0400)">17:57</div>
<div class="t g" style="left:785.94px;top:571.46px;font-size:12.4px;line-height:12.4px;color:#000;transform:scaleX(1.0400)">1,000</div>
<div class="t g" style="left:841.94px;top:571.46px;font-size:12.4px;line-height:12.4px;color:#000;transform:scaleX(1.0400)">8,000</div>
<div class="t g" style="left:897.94px;top:571.46px;font-size:12.4px;line-height:12.4px;color:#000;transform:scaleX(1.0400)">0,000</div>
<div class="t g" style="left:953.94px;top:571.46px;font-size:12.4px;line-height:12.4px;color:#000;transform:scaleX(1.0400)">0,000</div>
<div class="t g" style="left:1035.02px;top:571.46px;font-size:12.4px;line-height:12.4px;color:#000;transform:scaleX(1.0400)">0</div>
<div class="t g" style="left:1091.02px;top:571.46px;font-size:12.4px;line-height:12.4px;color:#000;transform:scaleX(1.0400)">0</div>
<div class="t g" style="left:1107.94px;top:571.46px;font-size:12.4px;line-height:12.4px;color:#000;transform:scaleX(1.0400)">1,450</div>
<div class="t g" style="left:1149.94px;top:571.46px;font-size:12.4px;line-height:12.4px;color:#000;transform:scaleX(1.0400)">0,000</div>
<div class="t g" style="left:1191.94px;top:571.46px;font-size:12.4px;line-height:12.4px;color:#000;transform:scaleX(1.0400)">0,000</div>
<div class="t g" style="left:1228.30px;top:571.46px;font-size:12.4px;line-height:12.4px;color:#000;transform:scaleX(1.0400)">HC</div>
<div class="t g" style="left:1284.30px;top:571.46px;font-size:12.4px;line-height:12.4px;color:#000;transform:scaleX(1.0400)">X</div>
<div class="t g" style="left:1415.94px;top:571.46px;font-size:12.4px;line-height:12.4px;color:#000;transform:scaleX(1.0400)">9,450</div>
<div class="t g" style="left:24.30px;top:591.46px;font-size:12.4px;line-height:12.4px;color:#000;transform:scaleX(1.0270)">00129</div>
<div class="t g" style="left:129.90px;top:591.46px;font-size:12.4px;line-height:12.4px;color:#000;transform:scaleX(1.0952)">Nguyễn văn Đến</div>
<div class="t g" style="left:304.80px;top:591.46px;font-size:12.4px;line-height:12.4px;color:#000;transform:scaleX(1.1109)">Văn phòng</div>
<div class="t g" style="left:409.70px;top:591.46px;font-size:12.4px;line-height:12.4px;color:#000;transform:scaleX(1.0607)">Chưa sắp xếp</div>
<div class="t g" style="left:527.10px;top:591.46px;font-size:12.4px;line-height:12.4px;color:#000;transform:scaleX(1.0585)">15-10-2019</div>
<div class="t g" style="left:598.30px;top:591.46px;font-size:12.4px;line-height:12.4px;color:#000;transform:scaleX(1.0400)">T.3</div>
<div class="t g" style="left:654.30px;top:591.46px;font-size:12.4px;line-height:12.4px;color:#000;transform:scaleX(1.0400)">07:15</div>
<div class="t g" style="left:710.30px;top:591.46px;font-size:12.4px;line-height:12.4px;color:#000;transform:scaleX(1.0400)">17:28</div>
<div class="t g" style="left:785.94px;top:591.46px;font-size:12.4px;line-height:12.4px;color:#000;transform:scaleX(1.0400)">1,000</div>
<div class="t g" style="left:841.94px;top:591.46px;font-size:12.4px;line-height:12.4px;color:#000;transform:scaleX(1.0400)">8,000</div>
<div class="t g" style="left:897.94px;top:591.46px;font-size:12.4px;line-height:12.4px;color:#000;transform:scaleX(1.0400)">0,000</div>
<div class="t g" style="left:953.94px;top:591.46px;font-size:12.4px;line-height:12.4px;color:#000;transform:scaleX(1.0400)">0,000</div>
<div class="t g" style="left:1035.02px;top:591.46px;font-size:12.4px;line-height:12.4px;color:#000;transform:scaleX(1.0400)">0</div>
<div class="t g" style="left:1091.02px;top:591.46px;font-size:12.4px;line-height:12.4px;color:#000;transform:scaleX(1.0400)">0</div>
<div class="t g" style="left:1107.94px;top:591.46px;font-size:12.4px;line-height:12.4px;color:#000;transform:scaleX(1.0400)">0,967</div>
<div class="t g" style="left:1149.94px;top:591.46px;font-size:12.4px;line-height:12.4px;color:#000;transform:scaleX(1.0400)">0,000</div>
<div class="t g" style="left:1191.94px;top:591.46px;font-size:12.4px;line-height:12.4px;color:#000;transform:scaleX(1.0400)">0,000</div>
<div class="t g" style="left:1228.30px;top:591.46px;font-size:12.4px;line-height:12.4px;color:#000;transform:scaleX(1.0400)">HC</div>
<div class="t g" style="left:1284.30px;top:591.46px;font-size:12.4px;line-height:12.4px;color:#000;transform:scaleX(1.0400)">X</div>
<div class="t g" style="left:1415.94px;top:591.46px;font-size:12.4px;line-height:12.4px;color:#000;transform:scaleX(1.0400)">8,967</div>
<div class="t g" style="left:24.30px;top:611.46px;font-size:12.4px;line-height:12.4px;color:#000;transform:scaleX(1.0270)">00129</div>
<div class="t g" style="left:129.90px;top:611.46px;font-size:12.4px;line-height:12.4px;color:#000;transform:scaleX(1.0952)">Nguyễn văn Đến</div>
<div class="t g" style="left:304.80px;top:611.46px;font-size:12.4px;line-height:12.4px;color:#000;transform:scaleX(1.1109)">Văn phòng</div>
<div class="t g" style="left:409.70px;top:611.46px;font-size:12.4px;line-height:12.4px;color:#000;transform:scaleX(1.0607)">Chưa sắp xếp</div>
<div class="t g" style="left:527.10px;top:611.46px;font-size:12.4px;line-height:12.4px;color:#000;transform:scaleX(1.0585)">16-10-2019</div>
<div class="t g" style="left:598.30px;top:611.46px;font-size:12.4px;line-height:12.4px;color:#000;transform:scaleX(1.0400)">T.4</div>
<div class="t g" style="left:654.30px;top:611.46px;font-size:12.4px;line-height:12.4px;color:#000;transform:scaleX(1.0400)">07:13</div>
<div class="t g" style="left:710.30px;top:611.46px;font-size:12.4px;line-height:12.4px;color:#000;transform:scaleX(1.0400)">17:02</div>
<div class="t g" style="left:785.94px;top:611.46px;font-size:12.4px;line-height:12.4px;color:#000;transform:scaleX(1.0400)">1,000</div>
<div class="t g" style="left:841.94px;top:611.46px;font-size:12.4px;line-height:12.4px;color:#000;transform:scaleX(1.0400)">8,000</div>
<div class="t g" style="left:897.94px;top:611.46px;font-size:12.4px;line-height:12.4px;color:#000;transform:scaleX(1.0400)">0,000</div>
<div class="t g" style="left:953.94px;top:611.46px;font-size:12.4px;line-height:12.4px;color:#000;transform:scaleX(1.0400)">0,000</div>
<div class="t g" style="left:1035.02px;top:611.46px;font-size:12.4px;line-height:12.4px;color:#000;transform:scaleX(1.0400)">0</div>
<div class="t g" style="left:1091.02px;top:611.46px;font-size:12.4px;line-height:12.4px;color:#000;transform:scaleX(1.0400)">0</div>
<div class="t g" style="left:1107.94px;top:611.46px;font-size:12.4px;line-height:12.4px;color:#000;transform:scaleX(1.0400)">0,533</div>
<div class="t g" style="left:1149.94px;top:611.46px;font-size:12.4px;line-height:12.4px;color:#000;transform:scaleX(1.0400)">0,000</div>
<div class="t g" style="left:1191.94px;top:611.46px;font-size:12.4px;line-height:12.4px;color:#000;transform:scaleX(1.0400)">0,000</div>
<div class="t g" style="left:1228.30px;top:611.46px;font-size:12.4px;line-height:12.4px;color:#000;transform:scaleX(1.0400)">HC</div>
<div class="t g" style="left:1284.30px;top:611.46px;font-size:12.4px;line-height:12.4px;color:#000;transform:scaleX(1.0400)">X</div>
<div class="t g" style="left:1415.94px;top:611.46px;font-size:12.4px;line-height:12.4px;color:#000;transform:scaleX(1.0400)">8,533</div>
<div class="t g" style="left:24.30px;top:631.46px;font-size:12.4px;line-height:12.4px;color:#000;transform:scaleX(1.0270)">00129</div>
<div class="t g" style="left:129.90px;top:631.46px;font-size:12.4px;line-height:12.4px;color:#000;transform:scaleX(1.0952)">Nguyễn văn Đến</div>
<div class="t g" style="left:304.80px;top:631.46px;font-size:12.4px;line-height:12.4px;color:#000;transform:scaleX(1.1109)">Văn phòng</div>
<div class="t g" style="left:409.70px;top:631.46px;font-size:12.4px;line-height:12.4px;color:#000;transform:scaleX(1.0607)">Chưa sắp xếp</div>
<div class="t g" style="left:527.10px;top:631.46px;font-size:12.4px;line-height:12.4px;color:#000;transform:scaleX(1.0585)">17-10-2019</div>
<div class="t g" style="left:598.30px;top:631.46px;font-size:12.4px;line-height:12.4px;color:#000;transform:scaleX(1.0400)">T.5</div>
<div class="t g" style="left:654.30px;top:631.46px;font-size:12.4px;line-height:12.4px;color:#000;transform:scaleX(1.0400)">07:17</div>
<div class="t g" style="left:785.94px;top:631.46px;font-size:12.4px;line-height:12.4px;color:#000;transform:scaleX(1.0400)">0,000</div>
<div class="t g" style="left:841.94px;top:631.46px;font-size:12.4px;line-height:12.4px;color:#000;transform:scaleX(1.0400)">0,000</div>
<div class="t g" style="left:897.94px;top:631.46px;font-size:12.4px;line-height:12.4px;color:#000;transform:scaleX(1.0400)">0,000</div>
<div class="t g" style="left:953.94px;top:631.46px;font-size:12.4px;line-height:12.4px;color:#000;transform:scaleX(1.0400)">0,000</div>
<div class="t g" style="left:1035.02px;top:631.46px;font-size:12.4px;line-height:12.4px;color:#000;transform:scaleX(1.0400)">0</div>
<div class="t g" style="left:1091.02px;top:631.46px;font-size:12.4px;line-height:12.4px;color:#000;transform:scaleX(1.0400)">0</div>
<div class="t g" style="left:1107.94px;top:631.46px;font-size:12.4px;line-height:12.4px;color:#000;transform:scaleX(1.0400)">0,000</div>
<div class="t g" style="left:1149.94px;top:631.46px;font-size:12.4px;line-height:12.4px;color:#000;transform:scaleX(1.0400)">0,000</div>
<div class="t g" style="left:1191.94px;top:631.46px;font-size:12.4px;line-height:12.4px;color:#000;transform:scaleX(1.0400)">0,000</div>
<div class="t g" style="left:1228.30px;top:631.46px;font-size:12.4px;line-height:12.4px;color:#000;transform:scaleX(1.0400)">HC</div>
<div class="t g" style="left:1284.30px;top:631.46px;font-size:12.4px;line-height:12.4px;color:#000;transform:scaleX(1.0400)">KR</div>
<div class="t g" style="left:1415.94px;top:631.46px;font-size:12.4px;line-height:12.4px;color:#000;transform:scaleX(1.0400)">0,000</div>
<div class="t g" style="left:24.30px;top:651.46px;font-size:12.4px;line-height:12.4px;color:#000;transform:scaleX(1.0270)">00129</div>
<div class="t g" style="left:129.90px;top:651.46px;font-size:12.4px;line-height:12.4px;color:#000;transform:scaleX(1.0952)">Nguyễn văn Đến</div>
<div class="t g" style="left:304.80px;top:651.46px;font-size:12.4px;line-height:12.4px;color:#000;transform:scaleX(1.1109)">Văn phòng</div>
<div class="t g" style="left:409.70px;top:651.46px;font-size:12.4px;line-height:12.4px;color:#000;transform:scaleX(1.0607)">Chưa sắp xếp</div>
<div class="t g" style="left:527.10px;top:651.46px;font-size:12.4px;line-height:12.4px;color:#000;transform:scaleX(1.0585)">18-10-2019</div>
<div class="t g" style="left:598.30px;top:651.46px;font-size:12.4px;line-height:12.4px;color:#000;transform:scaleX(1.0400)">T.6</div>
<div class="t g" style="left:654.30px;top:651.46px;font-size:12.4px;line-height:12.4px;color:#000;transform:scaleX(1.0400)">07:12</div>
<div class="t g" style="left:710.30px;top:651.46px;font-size:12.4px;line-height:12.4px;color:#000;transform:scaleX(1.0400)">16:28</div>
<div class="t g" style="left:785.94px;top:651.46px;font-size:12.4px;line-height:12.4px;color:#000;transform:scaleX(1.0400)">0,996</div>
<div class="t g" style="left:841.94px;top:651.46px;font-size:12.4px;line-height:12.4px;color:#000;transform:scaleX(1.0400)">7,967</div>
<div class="t g" style="left:897.94px;top:651.46px;font-size:12.4px;line-height:12.4px;color:#000;transform:scaleX(1.0400)">0,000</div>
<div class="t g" style="left:953.94px;top:651.46px;font-size:12.4px;line-height:12.4px;color:#000;transform:scaleX(1.0400)">0,000</div>
<div class="t g" style="left:1035.02px;top:651.46px;font-size:12.4px;line-height:12.4px;color:#000;transform:scaleX(1.0400)">0</div>
<div class="t g" style="left:1091.02px;top:651.46px;font-size:12.4px;line-height:12.4px;color:#000;transform:scaleX(1.0400)">2</div>
<div class="t g" style="left:1107.94px;top:651.46px;font-size:12.4px;line-height:12.4px;color:#000;transform:scaleX(1.0400)">0,000</div>
<div class="t g" style="left:1149.94px;top:651.46px;font-size:12.4px;line-height:12.4px;color:#000;transform:scaleX(1.0400)">0,000</div>
<div class="t g" style="left:1191.94px;top:651.46px;font-size:12.4px;line-height:12.4px;color:#000;transform:scaleX(1.0400)">0,000</div>
<div class="t g" style="left:1228.30px;top:651.46px;font-size:12.4px;line-height:12.4px;color:#000;transform:scaleX(1.0400)">HC</div>
<div class="t g" style="left:1284.30px;top:651.46px;font-size:12.4px;line-height:12.4px;color:#000;transform:scaleX(1.0400)">X</div>
<div class="t g" style="left:1415.94px;top:651.46px;font-size:12.4px;line-height:12.4px;color:#000;transform:scaleX(1.0400)">7,967</div>
<div class="t g" style="left:24.30px;top:671.46px;font-size:12.4px;line-height:12.4px;color:#000;transform:scaleX(1.0270)">00129</div>
<div class="t g" style="left:129.90px;top:671.46px;font-size:12.4px;line-height:12.4px;color:#000;transform:scaleX(1.0952)">Nguyễn văn Đến</div>
<div class="t g" style="left:304.80px;top:671.46px;font-size:12.4px;line-height:12.4px;color:#000;transform:scaleX(1.1109)">Văn phòng</div>
<div class="t g" style="left:409.70px;top:671.46px;font-size:12.4px;line-height:12.4px;color:#000;transform:scaleX(1.0607)">Chưa sắp xếp</div>
<div class="t g" style="left:527.10px;top:671.46px;font-size:12.4px;line-height:12.4px;color:#000;transform:scaleX(1.0585)">19-10-2019</div>
<div class="t g" style="left:598.30px;top:671.46px;font-size:12.4px;line-height:12.4px;color:#000;transform:scaleX(1.0400)">T.7</div>
<div class="t g" style="left:654.30px;top:671.46px;font-size:12.4px;line-height:12.4px;color:#000;transform:scaleX(1.0400)">07:14</div>
<div class="t g" style="left:785.94px;top:671.46px;font-size:12.4px;line-height:12.4px;color:#000;transform:scaleX(1.0400)">0,000</div>
<div class="t g" style="left:841.94px;top:671.46px;font-size:12.4px;line-height:12.4px;color:#000;transform:scaleX(1.0400)">0,000</div>
<div class="t g" style="left:897.94px;top:671.46px;font-size:12.4px;line-height:12.4px;color:#000;transform:scaleX(1.0400)">0,000</div>
<div class="t g" style="left:953.94px;top:671.46px;font-size:12.4px;line-height:12.4px;color:#000;transform:scaleX(1.0400)">0,000</div>
<div class="t g" style="left:1035.02px;top:671.46px;font-size:12.4px;line-height:12.4px;color:#000;transform:scaleX(1.0400)">0</div>
<div class="t g" style="left:1091.02px;top:671.46px;font-size:12.4px;line-height:12.4px;color:#000;transform:scaleX(1.0400)">0</div>
<div class="t g" style="left:1107.94px;top:671.46px;font-size:12.4px;line-height:12.4px;color:#000;transform:scaleX(1.0400)">0,000</div>
<div class="t g" style="left:1149.94px;top:671.46px;font-size:12.4px;line-height:12.4px;color:#000;transform:scaleX(1.0400)">0,000</div>
<div class="t g" style="left:1191.94px;top:671.46px;font-size:12.4px;line-height:12.4px;color:#000;transform:scaleX(1.0400)">0,000</div>
<div class="t g" style="left:1228.30px;top:671.46px;font-size:12.4px;line-height:12.4px;color:#000;transform:scaleX(1.0400)">HC</div>
<div class="t g" style="left:1284.30px;top:671.46px;font-size:12.4px;line-height:12.4px;color:#000;transform:scaleX(1.0400)">KR</div>
<div class="t g" style="left:1415.94px;top:671.46px;font-size:12.4px;line-height:12.4px;color:#000;transform:scaleX(1.0400)">0,000</div>
<div class="t g" style="left:24.30px;top:691.46px;font-size:12.4px;line-height:12.4px;color:#000;transform:scaleX(1.0270)">00129</div>
<div class="t g" style="left:129.90px;top:691.46px;font-size:12.4px;line-height:12.4px;color:#000;transform:scaleX(1.0952)">Nguyễn văn Đến</div>
<div class="t g" style="left:304.80px;top:691.46px;font-size:12.4px;line-height:12.4px;color:#000;transform:scaleX(1.1109)">Văn phòng</div>
<div class="t g" style="left:409.70px;top:691.46px;font-size:12.4px;line-height:12.4px;color:#000;transform:scaleX(1.0607)">Chưa sắp xếp</div>
<div class="t g" style="left:527.10px;top:691.46px;font-size:12.4px;line-height:12.4px;color:#000;transform:scaleX(1.0585)">20-10-2019</div>
<div class="t g" style="left:598.30px;top:691.46px;font-size:12.4px;line-height:12.4px;color:#000;transform:scaleX(1.0400)">CN</div>
<div class="t g" style="left:785.94px;top:691.46px;font-size:12.4px;line-height:12.4px;color:#000;transform:scaleX(1.0400)">0,000</div>
<div class="t g" style="left:841.94px;top:691.46px;font-size:12.4px;line-height:12.4px;color:#000;transform:scaleX(1.0400)">0,000</div>
<div class="t g" style="left:897.94px;top:691.46px;font-size:12.4px;line-height:12.4px;color:#000;transform:scaleX(1.0400)">1,000</div>
<div class="t g" style="left:953.94px;top:691.46px;font-size:12.4px;line-height:12.4px;color:#000;transform:scaleX(1.0400)">8,000</div>
<div class="t g" style="left:1035.02px;top:691.46px;font-size:12.4px;line-height:12.4px;color:#000;transform:scaleX(1.0400)">0</div>
<div class="t g" style="left:1091.02px;top:691.46px;font-size:12.4px;line-height:12.4px;color:#000;transform:scaleX(1.0400)">0</div>
<div class="t g" style="left:1107.94px;top:691.46px;font-size:12.4px;line-height:12.4px;color:#000;transform:scaleX(1.0400)">0,000</div>
<div class="t g" style="left:1149.94px;top:691.46px;font-size:12.4px;line-height:12.4px;color:#000;transform:scaleX(1.0400)">0,000</div>
<div class="t g" style="left:1191.94px;top:691.46px;font-size:12.4px;line-height:12.4px;color:#000;transform:scaleX(1.0400)">0,000</div>
<div class="t g" style="left:1228.30px;top:691.46px;font-size:12.4px;line-height:12.4px;color:#000;transform:scaleX(1.0400)">--</div>
<div class="t g" style="left:1284.30px;top:691.46px;font-size:12.4px;line-height:12.4px;color:#000;transform:scaleX(1.0400)">V</div>
<div class="t g" style="left:1340.30px;top:691.46px;font-size:12.4px;line-height:12.4px;color:#000;transform:scaleX(1.0400)">V</div>
<div class="t g" style="left:1415.94px;top:691.46px;font-size:12.4px;line-height:12.4px;color:#000;transform:scaleX(1.0400)">0,000</div>
<div class="t g" style="left:24.30px;top:711.46px;font-size:12.4px;line-height:12.4px;color:#000;transform:scaleX(1.0270)">00129</div>
<div class="t g" style="left:129.90px;top:711.46px;font-size:12.4px;line-height:12.4px;color:#000;transform:scaleX(1.0952)">Nguyễn văn Đến</div>
<div class="t g" style="left:304.80px;top:711.46px;font-size:12.4px;line-height:12.4px;color:#000;transform:scaleX(1.1109)">Văn phòng</div>
<div class="t g" style="left:409.70px;top:711.46px;font-size:12.4px;line-height:12.4px;color:#000;transform:scaleX(1.0607)">Chưa sắp xếp</div>
<div class="t g" style="left:527.10px;top:711.46px;font-size:12.4px;line-height:12.4px;color:#000;transform:scaleX(1.0585)">21-10-2019</div>
<div class="t g" style="left:598.30px;top:711.46px;font-size:12.4px;line-height:12.4px;color:#000;transform:scaleX(1.0400)">T.2</div>
<div class="t g" style="left:654.30px;top:711.46px;font-size:12.4px;line-height:12.4px;color:#000;transform:scaleX(1.0400)">07:10</div>
<div class="t g" style="left:710.30px;top:711.46px;font-size:12.4px;line-height:12.4px;color:#000;transform:scaleX(1.0400)">20:33</div>
<div class="t g" style="left:785.94px;top:711.46px;font-size:12.4px;line-height:12.4px;color:#000;transform:scaleX(1.0400)">1,000</div>
<div class="t g" style="left:841.94px;top:711.46px;font-size:12.4px;line-height:12.4px;color:#000;transform:scaleX(1.0400)">8,000</div>
<div class="t g" style="left:897.94px;top:711.46px;font-size:12.4px;line-height:12.4px;color:#000;transform:scaleX(1.0400)">0,000</div>
<div class="t g" style="left:953.94px;top:711.46px;font-size:12.4px;line-height:12.4px;color:#000;transform:scaleX(1.0400)">0,000</div>
<div class="t g" style="left:1035.02px;top:711.46px;font-size:12.4px;line-height:12.4px;color:#000;transform:scaleX(1.0400)">0</div>
<div class="t g" style="left:1091.02px;top:711.46px;font-size:12.4px;line-height:12.4px;color:#000;transform:scaleX(1.0400)">0</div>
<div class="t g" style="left:1107.94px;top:711.46px;font-size:12.4px;line-height:12.4px;color:#000;transform:scaleX(1.0400)">2,500</div>
<div class="t g" style="left:1149.94px;top:711.46px;font-size:12.4px;line-height:12.4px;color:#000;transform:scaleX(1.0400)">2,000</div>
<div class="t g" style="left:1191.94px;top:711.46px;font-size:12.4px;line-height:12.4px;color:#000;transform:scaleX(1.0400)">0,000</div>
<div class="t g" style="left:1228.30px;top:711.46px;font-size:12.4px;line-height:12.4px;color:#000;transform:scaleX(1.0400)">HC</div>
<div class="t g" style="left:1284.30px;top:711.46px;font-size:12.4px;line-height:12.4px;color:#000;transform:scaleX(1.0400)">X</div>
<div class="t g" style="left:1408.78px;top:711.46px;font-size:12.4px;line-height:12.4px;color:#000;transform:scaleX(1.0400)">12,500</div>
</body></html>
